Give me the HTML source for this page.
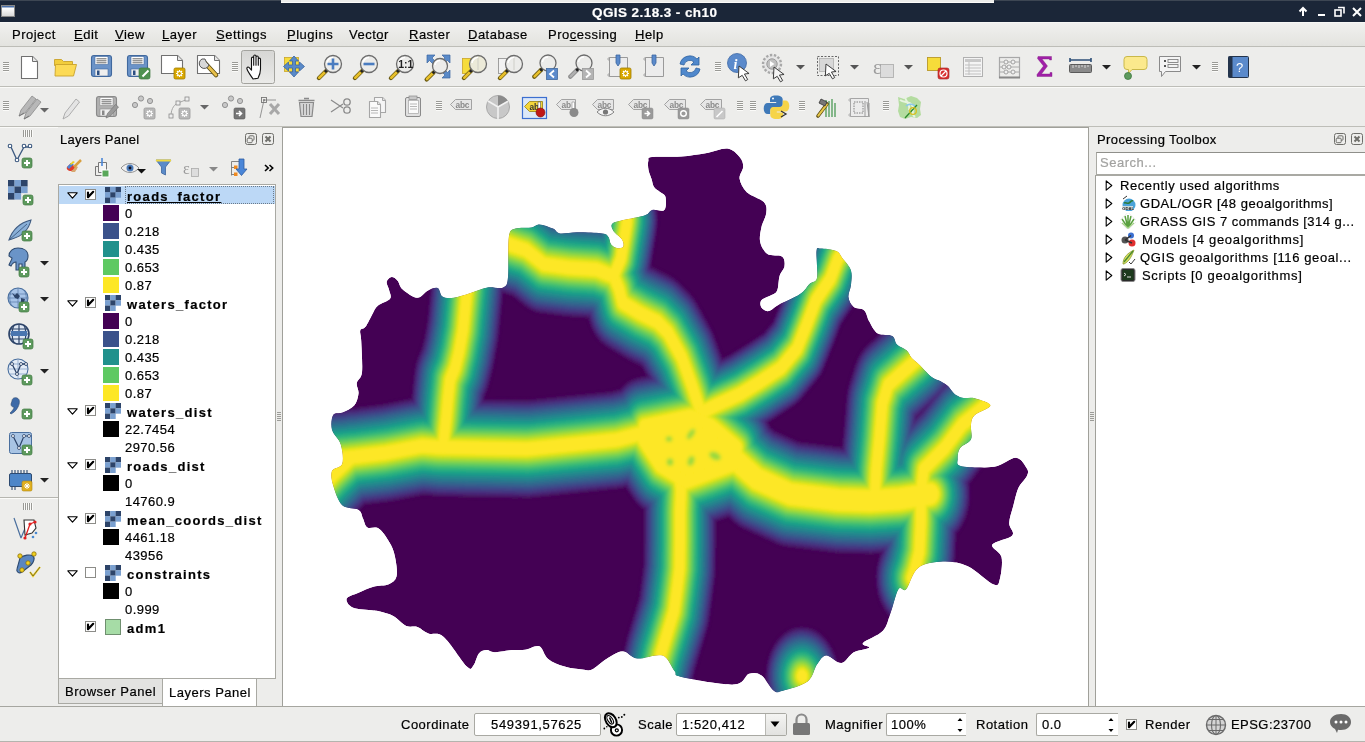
<!DOCTYPE html>
<html><head><meta charset="utf-8">
<style>
*{box-sizing:border-box}
html,body{margin:0;padding:0;width:1365px;height:742px;overflow:hidden;background:#ededeb;font-family:"Liberation Sans",sans-serif;font-size:13px;color:#000}
.a{position:absolute}
.t,.m{will-change:transform;-webkit-text-stroke:0.2px currentColor}
.t{position:absolute;white-space:pre;letter-spacing:0.5px;line-height:14px}
.b{font-weight:bold;letter-spacing:1.3px}
#title{left:0;top:0;width:1365px;height:22px;background:#1b2638}
#menu{left:0;top:22px;width:1365px;height:25px;background:linear-gradient(#f1f1ef,#e3e3df);border-bottom:1px solid #bdbdb7}
.m{position:absolute;top:28px;white-space:pre;letter-spacing:0.5px;line-height:14px}
.u{text-decoration:underline}
.hl{position:absolute;height:1px}
.vl{position:absolute;width:1px}
.tree{position:absolute;background:#fff;border:1px solid #a9a9a3}
.sw{position:absolute;width:16px;height:16px}
.cb{position:absolute;width:11px;height:11px;background:#fff;border:1px solid #8c8c88}
.cb svg{position:absolute;left:-1px;top:-1px}
</style></head>
<body>
<!-- title bar -->
<div id="title" class="a"></div>
<div class="a" style="left:0;top:0;width:1365px;height:1px;background:#3d4653"></div>
<div class="a" style="left:281px;top:0;width:713px;height:2px;background:#ededeb"></div>
<div class="a" style="left:281px;top:2px;width:713px;height:1px;background:#fcfcfa"></div>
<div class="a" style="left:1px;top:5px;width:14px;height:12px;background:linear-gradient(#4a6fa8 0,#4a6fa8 1px,#fff 2px,#d8d8d8 100%);border:1px solid #888"></div>
<div class="t b" style="left:592px;top:5px;color:#fff;font-size:13.5px;letter-spacing:0.42px;line-height:16px">QGIS 2.18.3 - ch10</div>
<svg class="a" style="left:1290px;top:0" width="75" height="22">
 <g fill="none" stroke="#fff" stroke-width="2">
  <path d="M13 16V9 M9.5 11.5 13 8 16.5 11.5"/>
  <path d="M28 15h7"/>
  <rect x="45" y="10" width="6" height="6" stroke-width="1.6"/>
  <path d="M48 7.5h6v6" stroke-width="1.6"/>
  <path d="M63 8l8 8M71 8l-8 8"/>
 </g>
</svg>
<!-- menu -->
<div id="menu" class="a"></div>
<div class="a" style="left:0;top:22px;width:1365px;height:1px;background:#f7f7f5"></div>
<div class="m" style="left:12px">Project</div>
<div class="m" style="left:74px"><span class="u">E</span>dit</div>
<div class="m" style="left:115px"><span class="u">V</span>iew</div>
<div class="m" style="left:162px"><span class="u">L</span>ayer</div>
<div class="m" style="left:216px"><span class="u">S</span>ettings</div>
<div class="m" style="left:287px"><span class="u">P</span>lugins</div>
<div class="m" style="left:349px">Vect<span class="u">o</span>r</div>
<div class="m" style="left:409px"><span class="u">R</span>aster</div>
<div class="m" style="left:468px"><span class="u">D</span>atabase</div>
<div class="m" style="left:548px">Pro<span class="u">c</span>essing</div>
<div class="m" style="left:635px"><span class="u">H</span>elp</div>

<!-- toolbars -->
<div class="a" style="left:0;top:86px;width:1365px;height:1px;background:#bebeb8"></div>
<div class="a" style="left:0;top:87px;width:1365px;height:1px;background:#fafaf8"></div>
<div class="a" style="left:0;top:126px;width:1365px;height:1px;background:#bebeb8"></div>
<div class="a" style="left:0;top:127px;width:58px;height:1px;background:#fafaf8"></div>

<svg class="a" style="left:0;top:0" width="1365" height="742">
<rect x="3" y="62" width="6" height="1" fill="#9a9a96"/><rect x="3" y="63" width="6" height="1" fill="#fbfbf9"/><rect x="3" y="64" width="6" height="1" fill="#9a9a96"/><rect x="3" y="65" width="6" height="1" fill="#fbfbf9"/><rect x="3" y="66" width="6" height="1" fill="#9a9a96"/><rect x="3" y="67" width="6" height="1" fill="#fbfbf9"/><rect x="3" y="68" width="6" height="1" fill="#9a9a96"/><rect x="3" y="69" width="6" height="1" fill="#fbfbf9"/><rect x="3" y="70" width="6" height="1" fill="#9a9a96"/><rect x="3" y="71" width="6" height="1" fill="#fbfbf9"/>
<path d="M21.5 56.5h11l5 5v17h-16z" fill="#fff" stroke="#707070" stroke-width="1.1" stroke-linejoin="round"/><path d="M32.5 56.5v5h5" fill="#e6e6e6" stroke="#707070" stroke-width="1"/>
<path d="M54.5 59.5h7l2 2h9v4h-18z" fill="#f2cd3c" stroke="#c9a32a" stroke-width="0.9"/>
<path d="M55.5 64.5h21l-3 11.5h-18.5z" fill="#fcda55" stroke="#c9a32a" stroke-width="0.9" stroke-linejoin="round"/>
<rect x="91.5" y="55.5" width="20" height="21" rx="2.5" fill="#6b93c8" stroke="#41699e" stroke-width="1.1"/><rect x="95" y="56.5" width="13" height="8" fill="#fff" stroke="#41699e" stroke-width="0.6"/><path d="M96.5 58.8h10M96.5 60.8h10M96.5 62.8h10" stroke="#555" stroke-width="0.9"/><rect x="95" y="69" width="13" height="7" fill="#eee" stroke="#41699e" stroke-width="0.6"/><rect x="97" y="70.5" width="2.5" height="4.5" fill="#2c4f82"/>
<rect x="127.5" y="55.5" width="20" height="21" rx="2.5" fill="#6b93c8" stroke="#41699e" stroke-width="1.1"/><rect x="131" y="56.5" width="13" height="8" fill="#fff" stroke="#41699e" stroke-width="0.6"/><path d="M132.5 58.8h10M132.5 60.8h10M132.5 62.8h10" stroke="#555" stroke-width="0.9"/><rect x="131" y="69" width="13" height="7" fill="#eee" stroke="#41699e" stroke-width="0.6"/><rect x="133" y="70.5" width="2.5" height="4.5" fill="#2c4f82"/>
<rect x="139" y="68" width="11" height="11" rx="2" fill="#4f9150" stroke="#3f7a3f" stroke-width="0.7"/><path d="" stroke="#fff" stroke-width="2"/>
<path d="M142.5 76.5l6-6" stroke="#fff" stroke-width="2"/>
<path d="M161.5 55.5h16l5 5v13h-21z" fill="#fff" stroke="#707070" stroke-width="1.1" stroke-linejoin="round"/><path d="M177.5 55.5v5h5" fill="#e6e6e6" stroke="#707070" stroke-width="1"/>
<rect x="174" y="68" width="11" height="11" rx="1.5" fill="#d9a800" stroke="#a07c00" stroke-width="0.8"/><g stroke="#fff" stroke-width="1.2"><path d="M179.5 70v7M176 73.5h7M177 71l5 5M182 71l-5 5"/></g><circle cx="179.5" cy="73.5" r="2" fill="#d9a800" stroke="#fff" stroke-width="1"/>
<path d="M197.5 55.5h17l5 5v13h-22z" fill="#fff" stroke="#707070" stroke-width="1.1" stroke-linejoin="round"/><path d="M214.5 55.5v5h5" fill="#e6e6e6" stroke="#707070" stroke-width="1"/>
<path d="M205 63l11 12" stroke="#5a4a10" stroke-width="4.5" stroke-linecap="round"/><path d="M205.5 63.5l10.5 11.5" stroke="#e8c04a" stroke-width="2.8" stroke-linecap="round"/>
<path d="M202 59a5 5 0 1 0 7 6l-2.5-2.5-1.5-3.5z" fill="#d8d8d8" stroke="#555" stroke-width="1"/>
<rect x="232" y="62" width="6" height="1" fill="#9a9a96"/><rect x="232" y="63" width="6" height="1" fill="#fbfbf9"/><rect x="232" y="64" width="6" height="1" fill="#9a9a96"/><rect x="232" y="65" width="6" height="1" fill="#fbfbf9"/><rect x="232" y="66" width="6" height="1" fill="#9a9a96"/><rect x="232" y="67" width="6" height="1" fill="#fbfbf9"/><rect x="232" y="68" width="6" height="1" fill="#9a9a96"/><rect x="232" y="69" width="6" height="1" fill="#fbfbf9"/><rect x="232" y="70" width="6" height="1" fill="#9a9a96"/><rect x="232" y="71" width="6" height="1" fill="#fbfbf9"/>
<rect x="241.5" y="50.5" width="33" height="33" rx="2" fill="url(#gpress)" stroke="#a3a39e" stroke-width="1"/>
<path d="M253 79c-2-3-5-7-6-10-.6-1.6 1-2.6 2.2-1.4l2.3 2.6v-12c0-1.4 2.2-1.4 2.2 0v7-9c0-1.5 2.3-1.5 2.3 0v9-8c0-1.5 2.3-1.5 2.3 0v8-6c0-1.4 2.2-1.4 2.2 0v10c0 4-1 6-2.5 9z" fill="#fff" stroke="#111" stroke-width="1.1" stroke-linejoin="round"/>
<rect x="284.5" y="57.5" width="14" height="14" fill="#f6dc3a" stroke="#c9a52a" stroke-width="0.8"/>
<path d="M294 56l4.5 5h-3v4h4v-3l5 4.5-5 4.5v-3h-4v4h3l-4.5 5-4.5-5h3v-4h-4v3l-5-4.5 5-4.5v3h4v-4h-3z" fill="#5a8ac8" stroke="#3b66a0" stroke-width="0.8" stroke-linejoin="round"/>
<path d="M325.88 71.12L318.88 78.12" stroke="#6a5a10" stroke-width="4.2" stroke-linecap="round"/><path d="M325.28 71.72L319.28 77.72" stroke="#e8c02a" stroke-width="2.6" stroke-linecap="round"/><path d="M327.38 69.62L324.88 72.12" stroke="#222" stroke-width="2.6"/><circle cx="333" cy="64" r="8.5" fill="#ececea" stroke="#6c6c6c" stroke-width="1.3"/><path d="M327.0 63a6.0 6.0 0 0 1 6.0 -5.5" stroke="#fff" stroke-width="1.5" fill="none"/>
<path d="M333 58.5v11M327.5 64h11" stroke="#4a7cc0" stroke-width="2.6"/>
<path d="M361.88 71.12L354.88 78.12" stroke="#6a5a10" stroke-width="4.2" stroke-linecap="round"/><path d="M361.28 71.72L355.28 77.72" stroke="#e8c02a" stroke-width="2.6" stroke-linecap="round"/><path d="M363.38 69.62L360.88 72.12" stroke="#222" stroke-width="2.6"/><circle cx="369" cy="64" r="8.5" fill="#ececea" stroke="#6c6c6c" stroke-width="1.3"/><path d="M363.0 63a6.0 6.0 0 0 1 6.0 -5.5" stroke="#fff" stroke-width="1.5" fill="none"/>
<path d="M363.5 64h11" stroke="#4a7cc0" stroke-width="2.6"/>
<path d="M397.88 71.12L390.88 78.12" stroke="#6a5a10" stroke-width="4.2" stroke-linecap="round"/><path d="M397.28 71.72L391.28 77.72" stroke="#e8c02a" stroke-width="2.6" stroke-linecap="round"/><path d="M399.38 69.62L396.88 72.12" stroke="#222" stroke-width="2.6"/><circle cx="405" cy="64" r="8.5" fill="#ececea" stroke="#6c6c6c" stroke-width="1.3"/><path d="M399.0 63a6.0 6.0 0 0 1 6.0 -5.5" stroke="#fff" stroke-width="1.5" fill="none"/>
<text x="398.2" y="68.3" font-family="Liberation Sans" font-weight="bold" font-size="10.5" fill="#222">1:1</text>
<rect x="427" y="54" width="24" height="24" fill="none"/>
<path d="M427 55h8l-3 3 3.5 3.5-2.5 2.5-3.5-3.5-2.5 2.5zM450 55h-8l3 3-3.5 3.5 2.5 2.5 3.5-3.5 2.5 2.5zM450 78h-8l3-3-3.5-3.5 2.5-2.5 3.5 3.5 2.5-2.5z" fill="#5a8ac8" stroke="#3b66a0" stroke-width="0.7"/>
<path d="M433.6 72.4L426.6 79.4" stroke="#6a5a10" stroke-width="4.2" stroke-linecap="round"/><path d="M433.0 73.0L427.0 79.0" stroke="#e8c02a" stroke-width="2.6" stroke-linecap="round"/><path d="M435.1 70.9L432.6 73.4" stroke="#222" stroke-width="2.6"/><circle cx="440" cy="66" r="7.5" fill="#ececea" stroke="#6c6c6c" stroke-width="1.3"/><path d="M435.0 65a5.0 5.0 0 0 1 5.0 -4.5" stroke="#fff" stroke-width="1.5" fill="none"/>
<rect x="462.5" y="58.5" width="8" height="15" fill="#f6dc3a" stroke="#c9a52a" stroke-width="0.8"/>
<path d="M470.88 71.12L463.88 78.12" stroke="#6a5a10" stroke-width="4.2" stroke-linecap="round"/><path d="M470.28 71.72L464.28 77.72" stroke="#e8c02a" stroke-width="2.6" stroke-linecap="round"/><path d="M472.38 69.62L469.88 72.12" stroke="#222" stroke-width="2.6"/><circle cx="478" cy="64" r="8.5" fill="#ecead8" stroke="#6c6c6c" stroke-width="1.3"/><path d="M472.0 63a6.0 6.0 0 0 1 6.0 -5.5" stroke="#fff" stroke-width="1.5" fill="none"/>
<rect x="498.5" y="58.5" width="8" height="15" fill="#f2f2f2" stroke="#8a8a8a" stroke-width="0.8"/>
<path d="M506.88 71.12L499.88 78.12" stroke="#6a5a10" stroke-width="4.2" stroke-linecap="round"/><path d="M506.28 71.72L500.28 77.72" stroke="#e8c02a" stroke-width="2.6" stroke-linecap="round"/><path d="M508.38 69.62L505.88 72.12" stroke="#222" stroke-width="2.6"/><circle cx="514" cy="64" r="8.5" fill="#ececea" stroke="#6c6c6c" stroke-width="1.3"/><path d="M508.0 63a6.0 6.0 0 0 1 6.0 -5.5" stroke="#fff" stroke-width="1.5" fill="none"/>
<path d="M478 58v12M514 58v12" stroke="#c8c8c0" stroke-width="0.8"/>
<path d="M541.24 69.76L534.24 76.76" stroke="#6a5a10" stroke-width="4.2" stroke-linecap="round"/><path d="M540.64 70.36L534.64 76.36" stroke="#e8c02a" stroke-width="2.6" stroke-linecap="round"/><path d="M542.74 68.26L540.24 70.76" stroke="#222" stroke-width="2.6"/><circle cx="548" cy="63" r="8" fill="#ececea" stroke="#6c6c6c" stroke-width="1.3"/><path d="M542.5 62a5.5 5.5 0 0 1 5.5 -5" stroke="#fff" stroke-width="1.5" fill="none"/>
<rect x="546.5" y="68.5" width="11" height="11" fill="#5b8acb" stroke="#41699e" stroke-width="0.8"/><path d="M554 70.5l-4 3.5 4 3.5" stroke="#fff" stroke-width="1.8" fill="none"/>
<path d="M577.24 69.76L570.24 76.76" stroke="#8a8a8a" stroke-width="4.2" stroke-linecap="round"/><path d="M576.64 70.36L570.64 76.36" stroke="#b0b0b0" stroke-width="2.6" stroke-linecap="round"/><path d="M578.74 68.26L576.24 70.76" stroke="#222" stroke-width="2.6"/><circle cx="584" cy="63" r="8" fill="#ececea" stroke="#6c6c6c" stroke-width="1.3"/><path d="M578.5 62a5.5 5.5 0 0 1 5.5 -5" stroke="#fff" stroke-width="1.5" fill="none"/>
<rect x="582.5" y="68.5" width="11" height="11" fill="#b4b4b4" stroke="#9a9a9a" stroke-width="0.8"/><path d="M586 70.5l4 3.5-4 3.5" stroke="#fff" stroke-width="1.8" fill="none"/>
<path d="M609.5 57.5h18v19h-18z" fill="#ececec" stroke="#9a9a9a" stroke-width="1"/><path d="M609.5 57.5c-2 0-2 3 0 3M609.5 76.5c-2 0-2-3 0-3" stroke="#9a9a9a" fill="none"/>
<path d="M616 55h4v8l-2 3-2-3z" fill="#5b8acb" stroke="#3b66a0" stroke-width="0.8"/>
<rect x="620" y="68" width="11" height="11" rx="1.5" fill="#d9a800" stroke="#a07c00" stroke-width="0.8"/><g stroke="#fff" stroke-width="1.2"><path d="M625.5 70v7M622 73.5h7M623 71l5 5M628 71l-5 5"/></g><circle cx="625.5" cy="73.5" r="2" fill="#d9a800" stroke="#fff" stroke-width="1"/>
<path d="M645.5 57.5h18v19h-18z" fill="#ececec" stroke="#9a9a9a" stroke-width="1"/><path d="M645.5 57.5c-2 0-2 3 0 3M645.5 76.5c-2 0-2-3 0-3" stroke="#9a9a9a" fill="none"/>
<path d="M652 55h4v8l-2 3-2-3z" fill="#5b8acb" stroke="#3b66a0" stroke-width="0.8"/>
<path d="M680 64a10 10 0 0 1 17-5l2-2v8h-8l3-3a6 6 0 0 0-10 3z" fill="#4f88cc" stroke="#2f62a0" stroke-width="0.8" stroke-linejoin="round"/>
<path d="M700 69a10 10 0 0 1-17 5l-2 2v-8h8l-3 3a6 6 0 0 0 10-3z" fill="#4f88cc" stroke="#2f62a0" stroke-width="0.8" stroke-linejoin="round"/>
<rect x="715" y="62" width="6" height="1" fill="#9a9a96"/><rect x="715" y="63" width="6" height="1" fill="#fbfbf9"/><rect x="715" y="64" width="6" height="1" fill="#9a9a96"/><rect x="715" y="65" width="6" height="1" fill="#fbfbf9"/><rect x="715" y="66" width="6" height="1" fill="#9a9a96"/><rect x="715" y="67" width="6" height="1" fill="#fbfbf9"/><rect x="715" y="68" width="6" height="1" fill="#9a9a96"/><rect x="715" y="69" width="6" height="1" fill="#fbfbf9"/><rect x="715" y="70" width="6" height="1" fill="#9a9a96"/><rect x="715" y="71" width="6" height="1" fill="#fbfbf9"/>
<circle cx="737" cy="63" r="9.5" fill="#5b8acb" stroke="#3f6aa6" stroke-width="0.8"/><text x="733.5" y="68.5" font-family="Liberation Serif" font-style="italic" font-weight="bold" font-size="14" fill="#fff">i</text>
<path d="M739 66l11.0 6.0l-4.5 1.2l4.0 5.0l-2.0 1.6l-4.0 -5.0l-3.5 3.0z" fill="#fff" stroke="#333" stroke-width="0.9" stroke-linejoin="round" transform="rotate(8 739 66)"/>
<circle cx="772" cy="64" r="9" fill="#e6e6e6" stroke="#a8a8a8" stroke-width="2.4" stroke-dasharray="2.4 1.6"/><circle cx="772" cy="64" r="5.2" fill="#c0c0c0" stroke="#9a9a9a"/><path d="M770 61v6l4.5-3z" fill="#fff"/>
<path d="M774 67l11.0 6.0l-4.5 1.2l4.0 5.0l-2.0 1.6l-4.0 -5.0l-3.5 3.0z" fill="#f4f4f4" stroke="#333" stroke-width="0.9" stroke-linejoin="round" transform="rotate(8 774 67)"/>
<path d="M796 65h9l-4.5 4.5z" fill="#555"/>
<rect x="817.5" y="56.5" width="21" height="19" fill="none" stroke="#666" stroke-width="1" stroke-dasharray="2 1.5"/><rect x="819.5" y="58.5" width="14" height="13" fill="#d8d8d8" stroke="#b0b0b0" stroke-width="0.8"/>
<path d="M826 64l11.0 6.0l-4.5 1.2l4.0 5.0l-2.0 1.6l-4.0 -5.0l-3.5 3.0z" fill="#fff" stroke="#333" stroke-width="0.9" stroke-linejoin="round" transform="rotate(8 826 64)"/>
<path d="M850 65h9l-4.5 4.5z" fill="#555"/>
<rect x="880.5" y="64.5" width="13" height="13" fill="#dcdcdc" stroke="#b0b0b0" stroke-width="0.9"/>
<text x="873" y="74" font-family="Liberation Serif" font-size="20" fill="#9c9c9c">&#949;</text>
<path d="M904 65h9l-4.5 4.5z" fill="#555"/>
<rect x="927.5" y="57.5" width="13" height="13" fill="#f6dc3a" stroke="#b9992a" stroke-width="0.9"/>
<rect x="938" y="68" width="11" height="11" rx="2" fill="#d83030" stroke="#a02020" stroke-width="0.6"/><circle cx="943.5" cy="73.5" r="3.5" fill="none" stroke="#fff" stroke-width="1.2"/><path d="M941 76l5-5" stroke="#fff" stroke-width="1.2"/>
<rect x="963.5" y="57.5" width="19" height="19" fill="#f4f4f4" stroke="#b0b0b0" stroke-width="1"/><rect x="965" y="59" width="16" height="3" fill="#c8c8c8"/><path d="M965 65h16M965 68h16M965 71h16M965 74h16M969 62v13" stroke="#c0c0c0" stroke-width="1"/>
<rect x="999.5" y="57.5" width="20" height="20" fill="none" stroke="#a8a8a8" stroke-width="1.2"/><path d="M999 77.5h21" stroke="#888" stroke-width="2"/>
<path d="M1000 62h19M1000 67h19M1000 72h19" stroke="#aaa" stroke-width="1"/><g fill="#f0f0f0" stroke="#9a9a9a" stroke-width="0.9"><circle cx="1006" cy="62" r="2"/><circle cx="1013" cy="62" r="2"/><circle cx="1004" cy="67" r="2"/><circle cx="1009" cy="67" r="2"/><circle cx="1006" cy="72" r="2"/><circle cx="1013" cy="72" r="2"/></g>
<path d="M1038 56.5h13.5v3.5h-2v-1h-7.5l5.5 7-6 8h8.5v-1.5h2v4h-15v-2l6.5-8.5-6-7.5z" fill="#a020a8" stroke="#801880" stroke-width="0.4"/>
<path d="M1070 58v4M1091 58v4M1070 60h21" stroke="#2e4f78" stroke-width="1.6"/><rect x="1069.5" y="64.5" width="22" height="8" rx="1" fill="#8a8a8a" stroke="#5a5a5a" stroke-width="1"/><path d="M1073 65v3M1076 65v2M1079 65v3M1082 65v2M1085 65v3M1088 65v2" stroke="#eee" stroke-width="0.8"/>
<path d="M1102 65h9l-4.5 4.5z" fill="#222"/>
<path d="M1127 56.5h17a3 3 0 0 1 3 3v7a3 3 0 0 1-3 3h-12l-3.5 4v-4h-1.5a3 3 0 0 1-3-3v-7a3 3 0 0 1 3-3z" fill="#fbe98c" stroke="#c9b84a" stroke-width="1"/><circle cx="1128" cy="76" r="3.5" fill="#5e9a5e" stroke="#3f7a3f" stroke-width="0.8"/>
<path d="M1159.5 56.5h21v15h-15l-4 5v-5h-2z" fill="#f4f4f4" stroke="#8a8a8a" stroke-width="1" stroke-linejoin="round"/><path d="M1164 61h2M1164 66h2" stroke="#555" stroke-width="2"/><rect x="1168" y="59.5" width="10" height="3" fill="none" stroke="#777" stroke-width="0.8"/><rect x="1168" y="64.5" width="10" height="3" fill="none" stroke="#777" stroke-width="0.8"/>
<path d="M1192 65h9l-4.5 4.5z" fill="#222"/>
<rect x="1212" y="62" width="6" height="1" fill="#9a9a96"/><rect x="1212" y="63" width="6" height="1" fill="#fbfbf9"/><rect x="1212" y="64" width="6" height="1" fill="#9a9a96"/><rect x="1212" y="65" width="6" height="1" fill="#fbfbf9"/><rect x="1212" y="66" width="6" height="1" fill="#9a9a96"/><rect x="1212" y="67" width="6" height="1" fill="#fbfbf9"/><rect x="1212" y="68" width="6" height="1" fill="#9a9a96"/><rect x="1212" y="69" width="6" height="1" fill="#fbfbf9"/><rect x="1212" y="70" width="6" height="1" fill="#9a9a96"/><rect x="1212" y="71" width="6" height="1" fill="#fbfbf9"/>
<rect x="1228.5" y="56.5" width="20" height="21" rx="1" fill="#5b8acb" stroke="#24344c" stroke-width="1"/><rect x="1228.5" y="56.5" width="4" height="21" fill="#24344c"/><text x="1236" y="72" font-family="Liberation Sans" font-size="13" fill="#fff">?</text>
<rect x="3" y="101" width="6" height="1" fill="#9a9a96"/><rect x="3" y="102" width="6" height="1" fill="#fbfbf9"/><rect x="3" y="103" width="6" height="1" fill="#9a9a96"/><rect x="3" y="104" width="6" height="1" fill="#fbfbf9"/><rect x="3" y="105" width="6" height="1" fill="#9a9a96"/><rect x="3" y="106" width="6" height="1" fill="#fbfbf9"/><rect x="3" y="107" width="6" height="1" fill="#9a9a96"/><rect x="3" y="108" width="6" height="1" fill="#fbfbf9"/><rect x="3" y="109" width="6" height="1" fill="#9a9a96"/><rect x="3" y="110" width="6" height="1" fill="#fbfbf9"/>
<g stroke="#8a8a8a" stroke-width="0.8" fill="#b8b8b8"><path d="M19 116l2-6 11-14 4 3-11 14z"/><path d="M24 119l2-6 11-14 4 3-11 14z"/></g><path d="M19 116l5-3M24 119l5-3" stroke="#777" stroke-width="1"/>
<path d="M40 108h9l-4.5 4.5z" fill="#666"/>
<path d="M63 119l2-6 11-14 3.5 3-11 14z" fill="#e4e4e4" stroke="#a6a6a6" stroke-width="0.9"/>
<rect x="96.5" y="96.5" width="20" height="20" rx="2.5" fill="#b0b0b0" stroke="#8a8a8a" stroke-width="1.1"/><rect x="100" y="97.5" width="13" height="8" fill="#fff" stroke="#8a8a8a" stroke-width="0.6"/><path d="M101.5 99.8h10M101.5 101.8h10M101.5 103.8h10" stroke="#555" stroke-width="0.9"/><rect x="100" y="109" width="13" height="7" fill="#eee" stroke="#8a8a8a" stroke-width="0.6"/><rect x="102" y="110.5" width="2.5" height="4.5" fill="#888"/>
<path d="M106 118l1.5-4.5 8-9 3 2.5-8 9z" fill="#9a9a9a" stroke="#777" stroke-width="0.7"/>
<g fill="#c8c8c8" stroke="#8a8a8a" stroke-width="0.9"><circle cx="135" cy="105" r="2.6"/><circle cx="141" cy="98.5" r="2.6"/><circle cx="150" cy="101" r="2.6"/></g>
<rect x="144" y="108" width="11" height="11" rx="1.5" fill="#b8b8b8" stroke="#9a9a9a" stroke-width="0.8"/><g stroke="#fff" stroke-width="1.2"><path d="M149.5 110v7M146 113.5h7M147 111l5 5M152 111l-5 5"/></g><circle cx="149.5" cy="113.5" r="2" fill="#b8b8b8" stroke="#fff" stroke-width="1"/>
<path d="M171 116c0-8 4-12 7-13l10-4" stroke="#a6a6a6" stroke-width="1" fill="none"/><g fill="#eee" stroke="#8a8a8a" stroke-width="0.8"><rect x="169" y="114" width="4" height="4"/><rect x="176" y="101" width="4" height="4"/><rect x="185" y="97" width="4" height="4"/></g>
<rect x="179" y="108" width="11" height="11" rx="1.5" fill="#b8b8b8" stroke="#9a9a9a" stroke-width="0.8"/><g stroke="#fff" stroke-width="1.2"><path d="M184.5 110v7M181 113.5h7M182 111l5 5M187 111l-5 5"/></g><circle cx="184.5" cy="113.5" r="2" fill="#b8b8b8" stroke="#fff" stroke-width="1"/>
<path d="M200 105h9l-4.5 4.5z" fill="#666"/>
<g fill="#c8c8c8" stroke="#8a8a8a" stroke-width="0.9"><circle cx="225" cy="105" r="2.6"/><circle cx="231" cy="98.5" r="2.6"/><circle cx="240" cy="101" r="2.6"/></g>
<rect x="234" y="108" width="11" height="11" rx="1.5" fill="#777" stroke="#555" stroke-width="0.6"/><path d="M236 113.5h5M239 111l2.5 2.5-2.5 2.5" stroke="#fff" stroke-width="1.6" fill="none"/>
<path d="M260 118l4-18M264 100h12" stroke="#8a8a8a" stroke-width="0.9"/><rect x="261.5" y="97.5" width="5" height="5" fill="none" stroke="#777" stroke-width="0.9"/><circle cx="264" cy="100" r="1" fill="#777"/>
<path d="M270 104l9 10M279 104l-9 10" stroke="#a8a8a8" stroke-width="3"/>
<path d="M298.5 100.5h16M304 98.5h5" stroke="#8a8a8a" stroke-width="1.6"/><path d="M299.5 102.5h14l-1.5 14h-11z" fill="#d4d4d4" stroke="#8a8a8a" stroke-width="1.2"/><path d="M303.5 104v11M306.5 104v11M309.5 104v11" stroke="#8a8a8a" stroke-width="1"/>
<path d="M331 100l12 8M331 112l12-8" stroke="#8a8a8a" stroke-width="1.2"/><circle cx="347" cy="102" r="3.2" fill="none" stroke="#8a8a8a" stroke-width="1.3"/><circle cx="347" cy="110" r="3.2" fill="none" stroke="#8a8a8a" stroke-width="1.3"/>
<path d="M374.5 97.5h8l3 3v12h-11z" fill="#f6f6f6" stroke="#a6a6a6" stroke-width="1.1" stroke-linejoin="round"/><path d="M382.5 97.5v3h3" fill="#e6e6e6" stroke="#a6a6a6" stroke-width="1"/>
<path d="M369.5 101.5h8l3 3v13h-11z" fill="#fafafa" stroke="#a6a6a6" stroke-width="1.1" stroke-linejoin="round"/><path d="M377.5 101.5v3h3" fill="#e6e6e6" stroke="#a6a6a6" stroke-width="1"/>
<path d="M371 108h7M371 110.5h7M371 113h7" stroke="#a6a6a6" stroke-width="0.8"/>
<rect x="405.5" y="97.5" width="15" height="19" rx="1.5" fill="#e0e0e0" stroke="#8a8a8a" stroke-width="1"/><rect x="409" y="96" width="8" height="3.5" fill="#c8c8c8" stroke="#8a8a8a" stroke-width="0.7"/><rect x="408.5" y="100.5" width="10" height="13" fill="#fafafa" stroke="#a6a6a6" stroke-width="0.7"/><path d="M410 104h7M410 106.5h7M410 109h7" stroke="#a6a6a6" stroke-width="0.8"/>
<rect x="436" y="101" width="6" height="1" fill="#9a9a96"/><rect x="436" y="102" width="6" height="1" fill="#fbfbf9"/><rect x="436" y="103" width="6" height="1" fill="#9a9a96"/><rect x="436" y="104" width="6" height="1" fill="#fbfbf9"/><rect x="436" y="105" width="6" height="1" fill="#9a9a96"/><rect x="436" y="106" width="6" height="1" fill="#fbfbf9"/><rect x="436" y="107" width="6" height="1" fill="#9a9a96"/><rect x="436" y="108" width="6" height="1" fill="#fbfbf9"/><rect x="436" y="109" width="6" height="1" fill="#9a9a96"/><rect x="436" y="110" width="6" height="1" fill="#fbfbf9"/>
<path d="M450.5 104.5l5-5h16v10h-16z" fill="#e6e6e6" stroke="#9a9a9a" stroke-width="0.9" stroke-linejoin="round"/><text x="455.5" y="107.7" font-family="Liberation Sans" font-weight="bold" font-size="8.3" fill="#8a8a8a" letter-spacing="-0.2">abc</text>
<circle cx="498" cy="107" r="11.5" fill="#c8c8c8" stroke="#a8a8a8" stroke-width="1"/><path d="M498 107v-11.5a11.5 11.5 0 0 1 10 5.8z" fill="#8a8a8a"/><path d="M498 107v12M498 107l-10-6M498 107l10-5.8" stroke="#f2f2f2" stroke-width="1.6"/>
<rect x="522.5" y="97.5" width="24" height="21" fill="#dce8f8" stroke="#3c6fd0" stroke-width="1.2"/>
<path d="M524.5 106.5l5-5h13v10h-13z" fill="#f4d63a" stroke="#a08a20" stroke-width="0.9" stroke-linejoin="round"/><text x="529.5" y="109.7" font-family="Liberation Sans" font-weight="bold" font-size="8.3" fill="#333" letter-spacing="-0.2">ab</text>
<path d="M538 102h2.5v7h-2.5z" fill="#fff" stroke="#555" stroke-width="0.6"/><circle cx="540.5" cy="112.5" r="4.5" fill="#c01818" stroke="#801010" stroke-width="0.6"/>
<path d="M556.5 104.5l5-5h14v10h-14z" fill="#e6e6e6" stroke="#9a9a9a" stroke-width="0.9" stroke-linejoin="round"/><text x="561.5" y="107.7" font-family="Liberation Sans" font-weight="bold" font-size="8.3" fill="#8a8a8a" letter-spacing="-0.2">ab</text>
<path d="M572 102h2.5v7h-2.5z" fill="#fff" stroke="#8a8a8a" stroke-width="0.6"/><circle cx="574" cy="112.5" r="4.5" fill="#8a8a8a"/>
<path d="M592.5 104.5l5-5h16v10h-16z" fill="#e6e6e6" stroke="#9a9a9a" stroke-width="0.9" stroke-linejoin="round"/><text x="597.5" y="107.7" font-family="Liberation Sans" font-weight="bold" font-size="8.3" fill="#8a8a8a" letter-spacing="-0.2">abc</text>
<path d="M597 112c5-5 12-5 17 0c-5 5-12 5-17 0z" fill="#f4f4f4" stroke="#777" stroke-width="0.9"/><circle cx="605.5" cy="112" r="2.6" fill="#777"/>
<path d="M628.5 104.5l5-5h16v10h-16z" fill="#e6e6e6" stroke="#9a9a9a" stroke-width="0.9" stroke-linejoin="round"/><text x="633.5" y="107.7" font-family="Liberation Sans" font-weight="bold" font-size="8.3" fill="#8a8a8a" letter-spacing="-0.2">abc</text>
<rect x="642" y="108" width="11" height="11" rx="1.6" fill="#9a9a9a" stroke="#888" stroke-width="0.5"/><path d="M644.5 113.5h5M647 111l2.5 2.5-2.5 2.5" stroke="#fff" stroke-width="1.6" fill="none"/>
<path d="M664.5 104.5l5-5h16v10h-16z" fill="#e6e6e6" stroke="#9a9a9a" stroke-width="0.9" stroke-linejoin="round"/><text x="669.5" y="107.7" font-family="Liberation Sans" font-weight="bold" font-size="8.3" fill="#8a8a8a" letter-spacing="-0.2">abc</text>
<rect x="678" y="108" width="11" height="11" rx="1.6" fill="#9a9a9a" stroke="#888" stroke-width="0.5"/><circle cx="683.5" cy="113.5" r="2.8" fill="none" stroke="#fff" stroke-width="1.4"/>
<path d="M700.5 104.5l5-5h16v10h-16z" fill="#e6e6e6" stroke="#9a9a9a" stroke-width="0.9" stroke-linejoin="round"/><text x="705.5" y="107.7" font-family="Liberation Sans" font-weight="bold" font-size="8.3" fill="#8a8a8a" letter-spacing="-0.2">abc</text>
<rect x="714" y="108" width="11" height="11" rx="1.6" fill="#c8c8c8" stroke="#aaa" stroke-width="0.5"/><path d="M716.5 117l6-6" stroke="#fff" stroke-width="1.6"/>
<rect x="737" y="101" width="6" height="1" fill="#9a9a96"/><rect x="737" y="102" width="6" height="1" fill="#fbfbf9"/><rect x="737" y="103" width="6" height="1" fill="#9a9a96"/><rect x="737" y="104" width="6" height="1" fill="#fbfbf9"/><rect x="737" y="105" width="6" height="1" fill="#9a9a96"/><rect x="737" y="106" width="6" height="1" fill="#fbfbf9"/><rect x="737" y="107" width="6" height="1" fill="#9a9a96"/><rect x="737" y="108" width="6" height="1" fill="#fbfbf9"/><rect x="737" y="109" width="6" height="1" fill="#9a9a96"/><rect x="737" y="110" width="6" height="1" fill="#fbfbf9"/>
<rect x="750" y="101" width="6" height="1" fill="#9a9a96"/><rect x="750" y="102" width="6" height="1" fill="#fbfbf9"/><rect x="750" y="103" width="6" height="1" fill="#9a9a96"/><rect x="750" y="104" width="6" height="1" fill="#fbfbf9"/><rect x="750" y="105" width="6" height="1" fill="#9a9a96"/><rect x="750" y="106" width="6" height="1" fill="#fbfbf9"/><rect x="750" y="107" width="6" height="1" fill="#9a9a96"/><rect x="750" y="108" width="6" height="1" fill="#fbfbf9"/><rect x="750" y="109" width="6" height="1" fill="#9a9a96"/><rect x="750" y="110" width="6" height="1" fill="#fbfbf9"/>
<path d="M776 95.5c-5 0-6 2-6 4v2.5h6.2v1h-8.5c-2.5 0-4 2-4 5.5s1.5 5.5 4 5.5h2.5v-3c0-2 1.5-3.5 3.5-3.5h6c1.8 0 3-1.3 3-3v-5c0-2-1.8-4-6.5-4z" fill="#3f79b8"/><circle cx="773" cy="98.5" r="1" fill="#fff"/>
<path d="M777 119c5 0 6-2 6-4v-2.5h-6.2v-1h8.5c2.5 0 4-2 4-5.5s-1.5-5.5-4-5.5h-2.5v3c0 2-1.5 3.5-3.5 3.5h-6c-1.8 0-3 1.3-3 3v5c0 2 1.8 4 6.5 4z" fill="#f6d448"/><path d="M781 111l5 3-5 3" stroke="#333" stroke-width="1.3" fill="none"/>
<rect x="799" y="101" width="6" height="1" fill="#9a9a96"/><rect x="799" y="102" width="6" height="1" fill="#fbfbf9"/><rect x="799" y="103" width="6" height="1" fill="#9a9a96"/><rect x="799" y="104" width="6" height="1" fill="#fbfbf9"/><rect x="799" y="105" width="6" height="1" fill="#9a9a96"/><rect x="799" y="106" width="6" height="1" fill="#fbfbf9"/><rect x="799" y="107" width="6" height="1" fill="#9a9a96"/><rect x="799" y="108" width="6" height="1" fill="#fbfbf9"/><rect x="799" y="109" width="6" height="1" fill="#9a9a96"/><rect x="799" y="110" width="6" height="1" fill="#fbfbf9"/>
<path d="M826 100v17M829 101v16M832 99v18M835 103v14" stroke="#2e8a3a" stroke-width="1.1" fill="none"/>
<path d="M818 116l9-12" stroke="#5a4a10" stroke-width="3.6" stroke-linecap="round"/><path d="M818.3 115.7l8.6-11.4" stroke="#e8c84a" stroke-width="2" stroke-linecap="round"/><path d="M821 99l6 3-2 4-6-3z" fill="#777" stroke="#333" stroke-width="0.8"/>
<path d="M850.5 98.5h18v18h-18z" fill="#ececec" stroke="#a6a6a6" stroke-width="1"/><path d="M850.5 98.5c-2 0-2 3 0 3M850.5 116.5c-2 0-2-3 0-3" stroke="#a6a6a6" fill="none"/><rect x="854" y="102" width="9" height="11" fill="none" stroke="#777" stroke-width="0.9" stroke-dasharray="1.5 1"/><path d="M865 101v16M867 102l2 15M869 103v14" stroke="#9a9a9a" stroke-width="1"/>
<rect x="883" y="101" width="6" height="1" fill="#9a9a96"/><rect x="883" y="102" width="6" height="1" fill="#fbfbf9"/><rect x="883" y="103" width="6" height="1" fill="#9a9a96"/><rect x="883" y="104" width="6" height="1" fill="#fbfbf9"/><rect x="883" y="105" width="6" height="1" fill="#9a9a96"/><rect x="883" y="106" width="6" height="1" fill="#fbfbf9"/><rect x="883" y="107" width="6" height="1" fill="#9a9a96"/><rect x="883" y="108" width="6" height="1" fill="#fbfbf9"/><rect x="883" y="109" width="6" height="1" fill="#9a9a96"/><rect x="883" y="110" width="6" height="1" fill="#fbfbf9"/>
<path d="M898 97l6 2 7-3 6 2 4 4-1 7 1 6-4 3-6-1-6 2-5-2-2-6 1-6z" fill="#b4dca0"/><path d="M900 100c4 3 9 1 12 5s-2 8 3 12M905 96c0 6 6 8 4 14" stroke="#e8f4e0" stroke-width="2" fill="none"/><path d="M906 106c3-3 8-2 10 1" stroke="#8cc8e8" stroke-width="1.6" fill="none"/><path d="M905 118l12-13" stroke="#2a8a2a" stroke-width="1.3"/><circle cx="913" cy="111" r="3.3" fill="none" stroke="#d8c020" stroke-width="1.3"/>
<rect x="23" y="130" width="1" height="7" fill="#9a9a96"/><rect x="24" y="130" width="1" height="7" fill="#fbfbf9"/><rect x="25" y="130" width="1" height="7" fill="#9a9a96"/><rect x="26" y="130" width="1" height="7" fill="#fbfbf9"/><rect x="27" y="130" width="1" height="7" fill="#9a9a96"/><rect x="28" y="130" width="1" height="7" fill="#fbfbf9"/><rect x="29" y="130" width="1" height="7" fill="#9a9a96"/><rect x="30" y="130" width="1" height="7" fill="#fbfbf9"/><rect x="31" y="130" width="1" height="7" fill="#9a9a96"/><rect x="32" y="130" width="1" height="7" fill="#fbfbf9"/>
<path d="M11 147l6 13l7-13h8" stroke="#3d5a80" stroke-width="1.3" fill="none"/><g fill="#fff" stroke="#3d5a80" stroke-width="1.1"><circle cx="10" cy="146" r="1.8"/><circle cx="17" cy="160" r="1.8"/><circle cx="24" cy="146" r="1.8"/><circle cx="30" cy="146" r="1.8"/></g>
<rect x="22" y="158" width="10" height="10" rx="2" fill="#5e9a5e" stroke="#3f7a3f" stroke-width="0.7"/><path d="M27.0 160v6M24 163.0h6" stroke="#fff" stroke-width="2"/>
<rect x="8.0" y="180.0" width="6.6" height="6.6" fill="#2d4469"/>
<rect x="14.5" y="180.0" width="6.6" height="6.6" fill="#7aa0d0"/>
<rect x="21.0" y="180.0" width="6.6" height="6.6" fill="#2d4469"/>
<rect x="8.0" y="186.5" width="6.6" height="6.6" fill="#7aa0d0"/>
<rect x="14.5" y="186.5" width="6.6" height="6.6" fill="#2d4469"/>
<rect x="21.0" y="186.5" width="6.6" height="6.6" fill="#7aa0d0"/>
<rect x="8.0" y="193.0" width="6.6" height="6.6" fill="#2d4469"/>
<rect x="14.5" y="193.0" width="6.6" height="6.6" fill="#7aa0d0"/>
<rect x="23" y="195" width="10" height="10" rx="2" fill="#5e9a5e" stroke="#3f7a3f" stroke-width="0.7"/><path d="M28.0 197v6M25 200.0h6" stroke="#fff" stroke-width="2"/>
<path d="M9 240c3-9 10-17 22-20c-2 9-9 16-19 19z" fill="#8ab0d8" stroke="#3d5a80" stroke-width="1.1"/><path d="M9 240l18-16" stroke="#3d5a80" stroke-width="0.9"/>
<rect x="22" y="231" width="10" height="10" rx="2" fill="#5e9a5e" stroke="#3f7a3f" stroke-width="0.7"/><path d="M27.0 233v6M24 236.0h6" stroke="#fff" stroke-width="2"/>
<path d="M9 256c0-5 4-8 9-8 6 0 10 3 10 8 0 3-1 5-3 6v6h-3v-4h-3v6h-3v-8c-3 0-4 2-5 4l-2-1c1-3 3-5 3-7z" fill="#6a94c8" stroke="#2d4a70" stroke-width="1.1"/>
<rect x="19" y="267" width="10" height="10" rx="2" fill="#5e9a5e" stroke="#3f7a3f" stroke-width="0.7"/><path d="M24.0 269v6M21 272.0h6" stroke="#fff" stroke-width="2"/>
<path d="M40 261h9l-4.5 4.5z" fill="#222"/>
<circle cx="18" cy="298" r="10" fill="#a8c4e8" stroke="#4a6f9e" stroke-width="1.1"/><path d="M9 294h18M8 298h20M9 302h18M18 288v20M12 290c-3 5-3 11 0 16M24 290c3 5 3 11 0 16" stroke="#4a6f9e" stroke-width="0.6" fill="none"/><path d="M12 293l3 2 2-2 3 3-2 3-3-1zM21 298l4 1-1 4-3-1z" fill="#2d4469"/>
<rect x="19" y="302" width="10" height="10" rx="2" fill="#5e9a5e" stroke="#3f7a3f" stroke-width="0.7"/><path d="M24.0 304v6M21 307.0h6" stroke="#fff" stroke-width="2"/>
<path d="M40 297h9l-4.5 4.5z" fill="#222"/>
<circle cx="19" cy="334" r="10" fill="#dfe8f4" stroke="#2d4469" stroke-width="1.6"/><path d="M9 334h20M10.5 329h17M10.5 339h17M19 324v20M14 325c-2.5 5-2.5 13 0 18M24 325c2.5 5 2.5 13 0 18" stroke="#2d4469" stroke-width="1.2" fill="none"/><rect x="11" y="331" width="16" height="5" fill="#4a76b0"/>
<rect x="23" y="339" width="10" height="10" rx="2" fill="#5e9a5e" stroke="#3f7a3f" stroke-width="0.7"/><path d="M28.0 341v6M25 344.0h6" stroke="#fff" stroke-width="2"/>
<circle cx="18" cy="369" r="10" fill="#e4ecf6" stroke="#4a6f9e" stroke-width="1.1"/><path d="M8 369h20M10 364h16M10 374h16M18 359v20" stroke="#7a9ac0" stroke-width="0.7"/><path d="M12 364l5 10 4-10h6" stroke="#2d4469" stroke-width="1.3" fill="none"/><g fill="#fff" stroke="#2d4469" stroke-width="0.9"><circle cx="12" cy="364" r="1.5"/><circle cx="17" cy="374" r="1.5"/><circle cx="21" cy="364" r="1.5"/><circle cx="26" cy="364" r="1.5"/></g>
<rect x="22" y="375" width="10" height="10" rx="2" fill="#5e9a5e" stroke="#3f7a3f" stroke-width="0.7"/><path d="M27.0 377v6M24 380.0h6" stroke="#fff" stroke-width="2"/>
<path d="M40 369h9l-4.5 4.5z" fill="#222"/>
<path d="M12 401c0-3 3-4 5-3 3 1 3 5 1 9-2 4-5 6-7 7l-1-1c2-2 4-4 4-6-2 0-3-1-3-3z" fill="#3d6aa8" stroke="#2d4a70" stroke-width="0.6"/>
<rect x="22" y="409" width="10" height="10" rx="2" fill="#5e9a5e" stroke="#3f7a3f" stroke-width="0.7"/><path d="M27.0 411v6M24 414.0h6" stroke="#fff" stroke-width="2"/>
<rect x="9.5" y="432.5" width="22" height="21" rx="2" fill="#a8c4e4" stroke="#4a6f9e" stroke-width="1"/><path d="M13 436l6 12 5-12h5" stroke="#2d4469" stroke-width="1.2" fill="none"/><g fill="#fff" stroke="#2d4469" stroke-width="0.8"><circle cx="13" cy="436" r="1.5"/><circle cx="19" cy="448" r="1.5"/><circle cx="24" cy="436" r="1.5"/><circle cx="29" cy="436" r="1.5"/></g>
<rect x="22" y="445" width="10" height="10" rx="2" fill="#5e9a5e" stroke="#3f7a3f" stroke-width="0.7"/><path d="M27.0 447v6M24 450.0h6" stroke="#fff" stroke-width="2"/>
<rect x="9.5" y="473.5" width="22" height="13" rx="1.5" fill="#4d86c8" stroke="#2d4a70" stroke-width="1"/><path d="M12 470v3M15 470v3M18 470v3M21 470v3M24 470v3M27 470v3M12 487v3M15 487v3" stroke="#2d4a70" stroke-width="1.1"/>
<rect x="22" y="481" width="10" height="10" rx="1.5" fill="#e0b020" stroke="#b08810" stroke-width="0.6"/><path d="M27 483v6M24 486h6M25 484l4 4M29 484l-4 4" stroke="#fff" stroke-width="1"/>
<path d="M40 478h9l-4.5 4.5z" fill="#222"/>
<rect x="0" y="497" width="58" height="1" fill="#b6b6b0"/><rect x="0" y="498" width="58" height="1" fill="#fbfbf9"/>
<rect x="23" y="503" width="1" height="7" fill="#9a9a96"/><rect x="24" y="503" width="1" height="7" fill="#fbfbf9"/><rect x="25" y="503" width="1" height="7" fill="#9a9a96"/><rect x="26" y="503" width="1" height="7" fill="#fbfbf9"/><rect x="27" y="503" width="1" height="7" fill="#9a9a96"/><rect x="28" y="503" width="1" height="7" fill="#fbfbf9"/><rect x="29" y="503" width="1" height="7" fill="#9a9a96"/><rect x="30" y="503" width="1" height="7" fill="#fbfbf9"/><rect x="31" y="503" width="1" height="7" fill="#9a9a96"/><rect x="32" y="503" width="1" height="7" fill="#fbfbf9"/>
<path d="M14 518l7 20M21 538l5-12" stroke="#4a6f9e" stroke-width="1.2"/><path d="M24 520h10l2 8-4 5-7 2z" fill="#fff" stroke="#333" stroke-width="1.1"/><path d="M25 538l5-14 5-2" stroke="#e02020" stroke-width="1.3" fill="none"/><g fill="#e02020"><circle cx="25" cy="538" r="1.6"/><circle cx="30" cy="524" r="1.6"/><circle cx="35" cy="522" r="1.6"/></g><g fill="#4a8ad0"><circle cx="33" cy="537" r="1.3"/><circle cx="36" cy="533" r="1.3"/></g>
<path d="M20 558c4-3 10-4 13-2 2 2 1 6-2 9l-9 7c-3 2-6 0-5-3z" fill="#5a86c0" stroke="#2d4a70" stroke-width="1.1"/><g fill="#f0d020" stroke="#8a7010" stroke-width="0.8"><circle cx="20" cy="556" r="2.2"/><circle cx="34" cy="554" r="2.2"/><circle cx="22" cy="570" r="2.2"/><circle cx="28" cy="563" r="2.2"/></g><path d="M30 572l3 4 7-9" stroke="#f0d020" stroke-width="2" fill="none"/><path d="M30 572l3 4 7-9" stroke="#333" stroke-width="0.6" fill="none"/>
<path d="M71 171c-3 0-5-2-4-4l4-4 6 6z" fill="#e03a2a"/><path d="M67 167l4-4 3 1-5 5z" fill="#4a86d8"/><path d="M70 164l3-3 2 1-4 3z" fill="#f0d020"/><path d="M71 172l5-6 2 1-3 5z" fill="#d8a870"/><path d="M74 167l7-7" stroke="#d8a040" stroke-width="2.5"/>
<path d="M95.5 166.5h8v9h-8z" fill="none" stroke="#777" stroke-width="1"/><path d="M98.5 162.5h8v10h-8z" fill="#f4f4f4" stroke="#777" stroke-width="1"/><path d="M102 158v8" stroke="#4a86d8" stroke-width="1.6"/><rect x="102" y="170" width="7" height="7" fill="#5aa85a" stroke="#fff" stroke-width="1"/>
<path d="M121 168c5-6 13-6 18 0c-5 6-13 6-18 0z" fill="#eee" stroke="#888" stroke-width="0.9"/><circle cx="130" cy="168" r="3.5" fill="#4a7ab8"/><circle cx="130" cy="168" r="1.4" fill="#112"/>
<path d="M137 169h9l-4.5 4.5z" fill="#111"/>
<path d="M156 160h15l-5.5 7v8l-4-2v-6z" fill="#5a8ac8" stroke="#3d66a0" stroke-width="0.8"/><rect x="156" y="159.5" width="15" height="2" fill="#f0d840"/>
<text x="183" y="174" font-family="Liberation Serif" font-size="16" fill="#9a9a9a">&#949;</text><rect x="191.5" y="168.5" width="7" height="8" fill="#ddd" stroke="#aaa" stroke-width="0.8"/>
<path d="M209 167h9l-4.5 4.5z" fill="#888"/>
<path d="M231.5 161.5h8M231.5 161.5v14M231.5 167.5h3M231.5 174.5h3" stroke="#777" stroke-width="0.9" fill="none"/><rect x="234" y="165.5" width="3.5" height="3.5" fill="#f08a20"/><rect x="234" y="172.5" width="3.5" height="3.5" fill="#f08a20"/><path d="M239 159h5v10h3l-5.5 6.5-5.5-6.5h3z" fill="#4a86d8" stroke="#2d5aa0" stroke-width="0.8"/>
<path d="M265 165l3.2 3-3.2 3M269.5 165l3.2 3-3.2 3" stroke="#000" stroke-width="1.6" fill="none"/>
<g transform="translate(600 708)"><path d="M9 18l7 8" stroke="#000" stroke-width="1"/><circle cx="16.5" cy="22" r="5.6" fill="#fff" stroke="#000" stroke-width="1.9"/><circle cx="16.8" cy="22.3" r="1.5" fill="none" stroke="#000" stroke-width="1.3"/><ellipse cx="10.8" cy="12.2" rx="5" ry="7.6" transform="rotate(-33 10.8 12.2)" fill="#fff" stroke="#000" stroke-width="2"/><ellipse cx="10.2" cy="11.8" rx="2.4" ry="4.8" transform="rotate(-33 10.2 11.8)" fill="#fff" stroke="#000" stroke-width="1.1"/><path d="M9.5 9.5L11.8 14.8" stroke="#000" stroke-width="1.5"/><g fill="#000"><circle cx="24.3" cy="6.8" r="1"/><circle cx="21.8" cy="9" r="0.9"/><circle cx="18.8" cy="9.6" r="0.9"/><circle cx="4.3" cy="20.5" r="0.9"/><circle cx="6.8" cy="18.8" r="0.8"/></g></g>
<path d="M796.5 723v-3.5a5 5 0 0 1 10 0v3.5" stroke="#8a8a8a" stroke-width="2.2" fill="none"/><rect x="793" y="723" width="17" height="12" rx="1.5" fill="#777"/>
<circle cx="1216" cy="725" r="9.5" fill="#d4d4d4" stroke="#6a6a6a" stroke-width="1.4"/><path d="M1206.5 725h19M1216 715.5v19M1209 719.5h14M1209 730.5h14" stroke="#6a6a6a" stroke-width="1"/><ellipse cx="1216" cy="725" rx="4.5" ry="9.5" fill="none" stroke="#6a6a6a" stroke-width="1.1"/>
<path d="M1341 714c6 0 10 3.5 10 8s-4 8-10 8c-1 0-2 0-3-.3l-1 3.3 -2-4c-3-1.5-5-4-5-7 0-4.5 4.5-8 11-8z" fill="#6a6a6a"/><circle cx="1336" cy="722" r="1.5" fill="#fff"/><circle cx="1341" cy="722" r="1.5" fill="#fff"/><circle cx="1346" cy="722" r="1.5" fill="#fff"/>
<defs><linearGradient id="gpress" x1="0" y1="0" x2="0" y2="1"><stop offset="0" stop-color="#d6d6d4"/><stop offset="1" stop-color="#ebebe9"/></linearGradient></defs>
</svg>
<!-- map canvas -->
<div class="a" style="left:282px;top:127px;width:807px;height:580px;background:#fff;border-left:1px solid #a0a09a;border-top:1px solid #a0a09a;border-right:1px solid #a0a09a"></div>
<svg class="a" style="left:283px;top:128px" width="805" height="578" viewBox="283 128 805 578">
<defs>
<clipPath id="cl"><path d="M362.0,372.3C362.7,365.3 361.5,347.8 361.2,340.8C360.9,333.8 359.6,332.6 360.3,330.3C361.0,328.0 363.4,329.6 365.5,326.8C367.6,324.0 370.6,317.2 372.6,313.7C374.7,310.2 374.9,308.3 377.8,305.8C380.7,303.3 388.1,301.4 390.0,298.8C391.9,296.2 389.8,293.2 389.2,290.4C388.6,287.6 386.3,284.2 386.7,282.0C387.1,279.8 389.8,277.3 391.6,277.1C393.4,276.9 395.8,278.7 397.6,280.7C399.4,282.7 399.3,286.4 402.5,289.2C405.7,292.0 412.8,297.5 417.0,297.7C421.2,297.9 424.6,292.0 428.0,290.4C431.4,288.8 435.3,287.0 437.7,288.0C440.1,289.0 439.9,294.9 442.5,296.5C445.1,298.1 448.9,298.3 453.5,297.7C458.1,297.1 464.8,294.6 470.4,292.9C476.0,291.2 481.9,288.4 487.4,287.5C492.9,286.6 499.8,289.2 503.2,287.5C506.6,285.8 507.1,285.5 508.0,277.1C508.9,268.7 507.6,245.2 508.8,237.1C510.0,229.0 511.6,230.2 515.3,228.6C519.0,227.0 527.0,228.1 531.1,227.4C535.2,226.7 536.0,224.2 539.6,224.4C543.2,224.6 549.6,227.1 553.0,228.6C556.4,230.1 556.0,232.8 560.0,233.4C564.0,234.0 569.9,232.2 577.0,232.2C584.1,232.2 597.2,232.6 602.5,233.4C607.8,234.2 607.1,235.3 608.5,237.1C609.9,238.9 609.6,242.5 611.0,244.3C612.4,246.1 615.0,247.6 617.0,248.0C619.0,248.4 622.3,248.2 623.1,246.8C623.9,245.4 623.5,242.1 621.9,239.5C620.3,236.9 615.0,233.6 613.4,231.0C611.8,228.4 610.6,225.5 612.2,223.7C613.8,221.9 617.6,221.5 623.1,220.1C628.6,218.7 640.1,216.9 645.0,215.2C649.9,213.5 649.0,210.8 652.2,209.9C655.4,209.0 662.1,212.1 664.3,209.9C666.5,207.8 666.2,200.0 665.5,197.0C664.8,194.0 661.9,193.7 660.0,192.0C658.1,190.3 655.4,189.2 654.0,187.0C652.6,184.8 652.4,181.8 651.5,179.0C650.6,176.2 649.0,173.0 648.5,170.0C648.0,167.0 647.7,163.2 648.3,161.0C648.9,158.8 646.5,157.8 652.0,157.0C657.5,156.2 672.4,157.1 681.3,156.5C690.2,155.9 697.9,154.6 705.6,153.3C713.3,152.0 721.7,147.9 727.4,148.5C733.1,149.1 737.0,154.0 739.6,157.0C742.2,160.0 743.2,163.1 743.2,166.7C743.2,170.3 739.0,174.6 739.6,178.8C740.2,183.1 742.8,188.3 746.8,192.2C750.8,196.0 760.5,198.5 763.8,201.9C767.0,205.3 766.7,208.6 766.3,212.8C765.9,217.1 762.4,222.6 761.4,227.4C760.4,232.2 759.2,237.5 760.2,241.9C761.2,246.3 763.9,251.6 767.5,254.0C771.1,256.4 779.2,254.5 782.0,256.5C784.8,258.5 784.9,263.0 784.5,266.2C784.1,269.4 780.8,271.9 779.6,275.9C778.4,279.9 778.6,287.2 777.2,290.4C775.8,293.6 773.7,293.7 771.1,295.3C768.5,296.9 763.0,298.2 761.4,300.2C759.8,302.2 760.2,305.6 761.4,307.4C762.6,309.2 765.9,311.5 768.7,311.1C771.5,310.7 773.2,307.8 778.4,305.0C783.6,302.2 794.8,297.7 800.0,294.1C805.2,290.6 806.9,286.4 809.7,283.7C812.5,281.0 815.9,283.1 817.0,277.7C818.1,272.2 815.9,255.9 816.5,251.0C817.1,246.1 817.3,248.5 820.6,248.5C823.9,248.5 832.8,249.4 836.4,251.0C840.0,252.6 840.1,255.0 842.5,258.2C844.9,261.4 849.6,265.9 851.0,270.4C852.4,274.9 851.4,280.6 851.0,285.0C850.6,289.4 848.1,293.4 848.5,297.0C848.9,300.6 850.8,304.6 853.4,306.8C856.0,309.0 861.7,308.0 864.3,310.4C866.9,312.8 867.0,317.4 869.2,321.3C871.4,325.2 873.9,331.1 877.7,333.5C881.5,335.9 889.0,334.1 892.2,335.9C895.4,337.7 894.6,342.0 897.0,344.4C899.4,346.8 904.4,348.2 906.8,350.4C909.2,352.6 909.6,355.4 911.6,357.7C913.6,360.0 915.7,361.2 918.9,364.3C922.1,367.4 927.4,373.6 931.0,376.4C934.6,379.2 937.9,379.7 940.7,381.3C943.5,382.9 945.8,384.1 948.0,386.1C950.2,388.1 951.7,391.4 954.1,393.4C956.5,395.3 959.2,397.0 962.6,397.8C966.0,398.6 970.1,396.9 974.7,398.2C979.4,399.5 990.5,402.7 990.5,405.5C990.5,408.3 978.0,412.0 974.7,415.2C971.5,418.4 971.6,420.8 971.0,424.9C970.4,428.9 972.8,435.6 971.0,439.5C969.2,443.4 962.4,444.8 960.2,448.0C958.0,451.2 957.5,455.9 957.7,458.9C957.9,461.9 955.3,464.9 961.4,466.2C967.5,467.5 985.0,468.1 994.1,466.7C1003.2,465.3 1010.5,457.4 1016.0,457.7C1021.5,458.0 1025.1,465.6 1026.9,468.6C1028.7,471.6 1028.3,472.7 1026.9,475.9C1025.5,479.1 1020.6,483.1 1018.4,488.0C1016.2,492.9 1015.0,499.2 1013.5,505.0C1012.0,510.8 1009.4,517.9 1009.2,523.0C1009.0,528.1 1015.1,531.8 1012.3,535.4C1009.5,539.0 994.1,541.0 992.3,544.6C990.5,548.2 1000.2,551.4 1001.5,557.0C1002.8,562.6 1001.3,573.9 1000.0,578.5C998.7,583.1 999.2,586.6 993.8,584.6C988.4,582.6 976.2,570.1 967.7,566.2C959.2,562.4 951.2,561.2 943.0,561.5C934.8,561.8 924.6,563.1 918.5,567.7C912.4,572.3 909.5,585.6 906.2,589.2C902.9,592.8 901.1,585.4 898.5,589.2C895.9,593.1 893.4,605.4 890.8,612.3C888.2,619.2 887.6,625.7 883.0,630.8C878.4,635.9 865.3,640.2 863.0,643.0C860.7,645.8 870.7,646.2 869.2,647.7C867.7,649.2 858.4,649.8 853.8,652.3C849.2,654.8 846.1,662.5 841.5,663.0C836.9,663.5 830.3,655.1 826.2,655.4C822.1,655.7 820.1,660.2 817.0,664.6C813.9,669.0 813.4,677.1 807.7,681.5C802.0,685.9 788.6,689.2 783.0,690.8C777.4,692.3 777.4,693.4 773.8,690.8C770.2,688.2 765.6,678.2 761.5,675.4C757.4,672.6 753.8,672.3 749.2,673.8C744.6,675.3 745.1,684.1 733.8,684.6C722.5,685.1 691.4,679.3 681.5,677.0C671.6,674.7 677.7,674.6 674.5,671.0C671.3,667.4 668.6,657.7 662.4,655.6C656.2,653.5 643.7,659.2 637.1,658.5C630.5,657.8 628.0,651.1 622.9,651.2C617.8,651.3 611.5,656.0 606.4,659.0C601.2,662.0 596.0,667.8 592.0,669.5C588.0,671.2 586.8,670.0 582.2,669.5C577.6,669.0 570.3,668.4 564.6,666.6C558.9,664.9 552.3,662.4 548.1,659.0C543.9,655.6 543.1,647.8 539.3,646.2C535.4,644.7 529.6,649.1 525.0,649.7C520.4,650.4 517.0,649.7 511.9,650.1C506.8,650.5 498.5,652.3 494.3,652.3C490.1,652.3 489.2,649.9 486.6,650.1C484.0,650.3 481.1,650.8 478.9,653.4C476.7,656.0 475.4,663.3 473.4,665.5C471.4,667.7 471.8,671.4 466.8,666.6C461.9,661.9 450.1,642.5 443.7,637.0C437.3,631.5 432.8,635.3 428.4,633.6C424.0,631.9 421.1,628.3 417.4,627.0C413.7,625.7 410.4,627.8 406.4,626.0C402.4,624.2 397.6,618.4 393.2,616.0C388.8,613.6 383.3,612.5 380.0,611.6C376.7,610.7 378.0,611.2 373.4,610.5C368.8,609.8 357.1,609.5 352.6,607.5C348.2,605.5 345.7,601.1 346.7,598.6C347.7,596.1 354.1,594.7 358.5,592.7C362.9,590.7 368.3,588.1 373.4,586.7C378.4,585.3 384.9,585.9 388.8,584.2C392.7,582.5 395.4,580.5 396.5,576.5C397.6,572.5 396.5,565.2 395.6,560.0C394.7,554.8 393.8,550.4 391.1,545.2C388.4,540.0 383.2,531.9 379.3,528.9C375.4,525.9 370.1,529.2 367.4,527.5C364.7,525.8 364.5,521.6 363.0,518.6C361.5,515.6 362.0,511.9 358.5,509.7C355.0,507.5 346.4,509.1 342.2,505.2C338.0,501.2 335.0,491.7 333.3,486.0C331.6,480.3 330.4,474.8 331.9,471.1C333.4,467.4 340.7,468.1 342.2,463.7C343.7,459.3 342.4,450.2 340.7,444.5C339.0,438.8 333.1,434.6 331.9,429.6C330.7,424.7 331.5,417.6 333.3,414.8C335.1,412.0 339.3,414.1 342.8,412.6C346.3,411.1 351.6,408.8 354.2,405.6C356.8,402.4 358.1,397.2 358.5,393.4C358.9,389.6 356.2,386.4 356.8,382.9C357.4,379.4 361.3,379.3 362.0,372.3Z"/></clipPath>
<filter id="bl" x="-5%" y="-5%" width="110%" height="110%"><feGaussianBlur stdDeviation="0.8"/></filter>
<filter id="bl2" x="-50%" y="-50%" width="200%" height="200%"><feGaussianBlur stdDeviation="1.6"/></filter>
</defs>
<g clip-path="url(#cl)">
<path fill="#440154" d="M362.0,372.3C362.7,365.3 361.5,347.8 361.2,340.8C360.9,333.8 359.6,332.6 360.3,330.3C361.0,328.0 363.4,329.6 365.5,326.8C367.6,324.0 370.6,317.2 372.6,313.7C374.7,310.2 374.9,308.3 377.8,305.8C380.7,303.3 388.1,301.4 390.0,298.8C391.9,296.2 389.8,293.2 389.2,290.4C388.6,287.6 386.3,284.2 386.7,282.0C387.1,279.8 389.8,277.3 391.6,277.1C393.4,276.9 395.8,278.7 397.6,280.7C399.4,282.7 399.3,286.4 402.5,289.2C405.7,292.0 412.8,297.5 417.0,297.7C421.2,297.9 424.6,292.0 428.0,290.4C431.4,288.8 435.3,287.0 437.7,288.0C440.1,289.0 439.9,294.9 442.5,296.5C445.1,298.1 448.9,298.3 453.5,297.7C458.1,297.1 464.8,294.6 470.4,292.9C476.0,291.2 481.9,288.4 487.4,287.5C492.9,286.6 499.8,289.2 503.2,287.5C506.6,285.8 507.1,285.5 508.0,277.1C508.9,268.7 507.6,245.2 508.8,237.1C510.0,229.0 511.6,230.2 515.3,228.6C519.0,227.0 527.0,228.1 531.1,227.4C535.2,226.7 536.0,224.2 539.6,224.4C543.2,224.6 549.6,227.1 553.0,228.6C556.4,230.1 556.0,232.8 560.0,233.4C564.0,234.0 569.9,232.2 577.0,232.2C584.1,232.2 597.2,232.6 602.5,233.4C607.8,234.2 607.1,235.3 608.5,237.1C609.9,238.9 609.6,242.5 611.0,244.3C612.4,246.1 615.0,247.6 617.0,248.0C619.0,248.4 622.3,248.2 623.1,246.8C623.9,245.4 623.5,242.1 621.9,239.5C620.3,236.9 615.0,233.6 613.4,231.0C611.8,228.4 610.6,225.5 612.2,223.7C613.8,221.9 617.6,221.5 623.1,220.1C628.6,218.7 640.1,216.9 645.0,215.2C649.9,213.5 649.0,210.8 652.2,209.9C655.4,209.0 662.1,212.1 664.3,209.9C666.5,207.8 666.2,200.0 665.5,197.0C664.8,194.0 661.9,193.7 660.0,192.0C658.1,190.3 655.4,189.2 654.0,187.0C652.6,184.8 652.4,181.8 651.5,179.0C650.6,176.2 649.0,173.0 648.5,170.0C648.0,167.0 647.7,163.2 648.3,161.0C648.9,158.8 646.5,157.8 652.0,157.0C657.5,156.2 672.4,157.1 681.3,156.5C690.2,155.9 697.9,154.6 705.6,153.3C713.3,152.0 721.7,147.9 727.4,148.5C733.1,149.1 737.0,154.0 739.6,157.0C742.2,160.0 743.2,163.1 743.2,166.7C743.2,170.3 739.0,174.6 739.6,178.8C740.2,183.1 742.8,188.3 746.8,192.2C750.8,196.0 760.5,198.5 763.8,201.9C767.0,205.3 766.7,208.6 766.3,212.8C765.9,217.1 762.4,222.6 761.4,227.4C760.4,232.2 759.2,237.5 760.2,241.9C761.2,246.3 763.9,251.6 767.5,254.0C771.1,256.4 779.2,254.5 782.0,256.5C784.8,258.5 784.9,263.0 784.5,266.2C784.1,269.4 780.8,271.9 779.6,275.9C778.4,279.9 778.6,287.2 777.2,290.4C775.8,293.6 773.7,293.7 771.1,295.3C768.5,296.9 763.0,298.2 761.4,300.2C759.8,302.2 760.2,305.6 761.4,307.4C762.6,309.2 765.9,311.5 768.7,311.1C771.5,310.7 773.2,307.8 778.4,305.0C783.6,302.2 794.8,297.7 800.0,294.1C805.2,290.6 806.9,286.4 809.7,283.7C812.5,281.0 815.9,283.1 817.0,277.7C818.1,272.2 815.9,255.9 816.5,251.0C817.1,246.1 817.3,248.5 820.6,248.5C823.9,248.5 832.8,249.4 836.4,251.0C840.0,252.6 840.1,255.0 842.5,258.2C844.9,261.4 849.6,265.9 851.0,270.4C852.4,274.9 851.4,280.6 851.0,285.0C850.6,289.4 848.1,293.4 848.5,297.0C848.9,300.6 850.8,304.6 853.4,306.8C856.0,309.0 861.7,308.0 864.3,310.4C866.9,312.8 867.0,317.4 869.2,321.3C871.4,325.2 873.9,331.1 877.7,333.5C881.5,335.9 889.0,334.1 892.2,335.9C895.4,337.7 894.6,342.0 897.0,344.4C899.4,346.8 904.4,348.2 906.8,350.4C909.2,352.6 909.6,355.4 911.6,357.7C913.6,360.0 915.7,361.2 918.9,364.3C922.1,367.4 927.4,373.6 931.0,376.4C934.6,379.2 937.9,379.7 940.7,381.3C943.5,382.9 945.8,384.1 948.0,386.1C950.2,388.1 951.7,391.4 954.1,393.4C956.5,395.3 959.2,397.0 962.6,397.8C966.0,398.6 970.1,396.9 974.7,398.2C979.4,399.5 990.5,402.7 990.5,405.5C990.5,408.3 978.0,412.0 974.7,415.2C971.5,418.4 971.6,420.8 971.0,424.9C970.4,428.9 972.8,435.6 971.0,439.5C969.2,443.4 962.4,444.8 960.2,448.0C958.0,451.2 957.5,455.9 957.7,458.9C957.9,461.9 955.3,464.9 961.4,466.2C967.5,467.5 985.0,468.1 994.1,466.7C1003.2,465.3 1010.5,457.4 1016.0,457.7C1021.5,458.0 1025.1,465.6 1026.9,468.6C1028.7,471.6 1028.3,472.7 1026.9,475.9C1025.5,479.1 1020.6,483.1 1018.4,488.0C1016.2,492.9 1015.0,499.2 1013.5,505.0C1012.0,510.8 1009.4,517.9 1009.2,523.0C1009.0,528.1 1015.1,531.8 1012.3,535.4C1009.5,539.0 994.1,541.0 992.3,544.6C990.5,548.2 1000.2,551.4 1001.5,557.0C1002.8,562.6 1001.3,573.9 1000.0,578.5C998.7,583.1 999.2,586.6 993.8,584.6C988.4,582.6 976.2,570.1 967.7,566.2C959.2,562.4 951.2,561.2 943.0,561.5C934.8,561.8 924.6,563.1 918.5,567.7C912.4,572.3 909.5,585.6 906.2,589.2C902.9,592.8 901.1,585.4 898.5,589.2C895.9,593.1 893.4,605.4 890.8,612.3C888.2,619.2 887.6,625.7 883.0,630.8C878.4,635.9 865.3,640.2 863.0,643.0C860.7,645.8 870.7,646.2 869.2,647.7C867.7,649.2 858.4,649.8 853.8,652.3C849.2,654.8 846.1,662.5 841.5,663.0C836.9,663.5 830.3,655.1 826.2,655.4C822.1,655.7 820.1,660.2 817.0,664.6C813.9,669.0 813.4,677.1 807.7,681.5C802.0,685.9 788.6,689.2 783.0,690.8C777.4,692.3 777.4,693.4 773.8,690.8C770.2,688.2 765.6,678.2 761.5,675.4C757.4,672.6 753.8,672.3 749.2,673.8C744.6,675.3 745.1,684.1 733.8,684.6C722.5,685.1 691.4,679.3 681.5,677.0C671.6,674.7 677.7,674.6 674.5,671.0C671.3,667.4 668.6,657.7 662.4,655.6C656.2,653.5 643.7,659.2 637.1,658.5C630.5,657.8 628.0,651.1 622.9,651.2C617.8,651.3 611.5,656.0 606.4,659.0C601.2,662.0 596.0,667.8 592.0,669.5C588.0,671.2 586.8,670.0 582.2,669.5C577.6,669.0 570.3,668.4 564.6,666.6C558.9,664.9 552.3,662.4 548.1,659.0C543.9,655.6 543.1,647.8 539.3,646.2C535.4,644.7 529.6,649.1 525.0,649.7C520.4,650.4 517.0,649.7 511.9,650.1C506.8,650.5 498.5,652.3 494.3,652.3C490.1,652.3 489.2,649.9 486.6,650.1C484.0,650.3 481.1,650.8 478.9,653.4C476.7,656.0 475.4,663.3 473.4,665.5C471.4,667.7 471.8,671.4 466.8,666.6C461.9,661.9 450.1,642.5 443.7,637.0C437.3,631.5 432.8,635.3 428.4,633.6C424.0,631.9 421.1,628.3 417.4,627.0C413.7,625.7 410.4,627.8 406.4,626.0C402.4,624.2 397.6,618.4 393.2,616.0C388.8,613.6 383.3,612.5 380.0,611.6C376.7,610.7 378.0,611.2 373.4,610.5C368.8,609.8 357.1,609.5 352.6,607.5C348.2,605.5 345.7,601.1 346.7,598.6C347.7,596.1 354.1,594.7 358.5,592.7C362.9,590.7 368.3,588.1 373.4,586.7C378.4,585.3 384.9,585.9 388.8,584.2C392.7,582.5 395.4,580.5 396.5,576.5C397.6,572.5 396.5,565.2 395.6,560.0C394.7,554.8 393.8,550.4 391.1,545.2C388.4,540.0 383.2,531.9 379.3,528.9C375.4,525.9 370.1,529.2 367.4,527.5C364.7,525.8 364.5,521.6 363.0,518.6C361.5,515.6 362.0,511.9 358.5,509.7C355.0,507.5 346.4,509.1 342.2,505.2C338.0,501.2 335.0,491.7 333.3,486.0C331.6,480.3 330.4,474.8 331.9,471.1C333.4,467.4 340.7,468.1 342.2,463.7C343.7,459.3 342.4,450.2 340.7,444.5C339.0,438.8 333.1,434.6 331.9,429.6C330.7,424.7 331.5,417.6 333.3,414.8C335.1,412.0 339.3,414.1 342.8,412.6C346.3,411.1 351.6,408.8 354.2,405.6C356.8,402.4 358.1,397.2 358.5,393.4C358.9,389.6 356.2,386.4 356.8,382.9C357.4,379.4 361.3,379.3 362.0,372.3Z"/>
<g filter="url(#bl)" fill="none" stroke-linejoin="round" stroke-linecap="round">
<polyline transform="translate(0,450.0) scale(1,1.3514) translate(0,-450.0)" stroke="#46085c" fill="none" stroke-width="74.00" points="469.0,316.8 466.0,339.0 463.0,361.2 459.0,377.5 455.0,389.3 450.0,398.2 448.0,411.5 446.0,427.8 443.0,447.8"/>
<polyline transform="translate(0,450.0) scale(1,1.3514) translate(0,-450.0)" stroke="#46085c" fill="none" stroke-width="74.00" points="300.0,458.9 349.0,455.6 386.0,452.2 422.0,447.0 438.6,448.1 527.5,449.3 616.4,442.6 654.0,435.2 683.0,428.5 700.0,424.8"/>
<polyline transform="translate(0,450.0) scale(1,1.3514) translate(0,-450.0)" stroke="#46085c" fill="none" stroke-width="74.00" points="352.0,455.2 334.0,467.8 318.0,481.1"/>
<polyline transform="translate(0,450.0) scale(1,1.3514) translate(0,-450.0)" stroke="#46085c" fill="none" stroke-width="74.00" points="500.0,294.6 510.5,298.3 526.3,302.2 543.8,312.6 570.0,315.2 596.3,316.4 613.8,321.6 619.0,330.7 622.6,341.1 640.0,348.8 657.6,355.3 668.0,363.1 681.6,381.3 692.0,402.3 698.0,416.0 701.8,424.1"/>
<polyline transform="translate(0,450.0) scale(1,1.3514) translate(0,-450.0)" stroke="#46085c" fill="none" stroke-width="62.90" points="627.0,279.8 626.0,285.4 620.8,308.7 614.0,320.5"/>
<polyline transform="translate(0,450.0) scale(1,1.3514) translate(0,-450.0)" stroke="#46085c" fill="none" stroke-width="62.90" points="850.0,294.6 837.7,309.0 830.4,323.3 816.0,339.0 806.8,357.0 797.1,374.9 780.9,389.3 761.5,398.9 740.5,408.5 716.2,416.8 700.0,422.8"/>
<polyline transform="translate(0,450.0) scale(1,1.3514) translate(0,-450.0)" stroke="#46085c" fill="none" stroke-width="74.00" points="683.0,427.8 678.5,452.1 679.0,470.0 681.0,479.6 680.0,495.9 680.0,517.3 679.5,538.1 677.0,552.9 674.0,569.1 667.0,586.2 661.0,601.0 655.0,620.2"/>
<polyline transform="translate(0,450.0) scale(1,1.3171) translate(0,-450.0)" stroke="#46085c" fill="none" stroke-width="82.00" points="705.0,436.3 722.0,448.5 740.0,460.6 757.0,472.0 790.0,483.4 838.0,488.0 870.0,488.7 900.0,487.2 930.0,483.4"/>
<polyline transform="translate(0,450.0) scale(1,1.3514) translate(0,-450.0)" stroke="#46085c" fill="none" stroke-width="74.00" points="930.0,372.3 917.8,382.6 898.4,395.2 888.2,401.9 882.3,415.7 879.3,442.1 876.3,464.1 875.0,481.1"/>
<polyline transform="translate(0,450.0) scale(1,1.3514) translate(0,-450.0)" stroke="#46085c" fill="none" stroke-width="74.00" points="1000.0,413.0 986.0,416.8 962.3,431.1 944.5,448.7 923.8,464.1 920.8,481.6 920.8,503.5 919.3,525.5 914.9,538.6 912.0,544.7"/>
<polyline transform="translate(0,450.0) scale(1,1.3514) translate(0,-450.0)" stroke="#46085c" fill="#46085c" stroke-width="74.00" points="644.0,432.2 691.0,424.8 712.0,432.2 737.0,447.8 735.0,460.4 686.0,473.7 660.0,461.8 643.0,442.6 644.0,432.2"/>
<polyline transform="translate(0,450.0) scale(1,1.3514) translate(0,-450.0)" stroke="#46085c" fill="none" stroke-width="74.00" points="802.0,617.2 802.5,617.6"/>
<polyline transform="translate(0,450.0) scale(1,1.3512) translate(0,-450.0)" stroke="#481a6c" fill="none" stroke-width="71.05" points="469.0,316.8 466.0,339.0 463.0,361.2 459.0,377.5 455.0,389.3 450.0,398.2 448.0,411.5 446.0,427.8 443.0,447.8"/>
<polyline transform="translate(0,450.0) scale(1,1.3512) translate(0,-450.0)" stroke="#481a6c" fill="none" stroke-width="71.05" points="300.0,458.9 349.0,455.6 386.0,452.2 422.0,447.0 438.6,448.1 527.5,449.3 616.4,442.6 654.0,435.2 683.0,428.5 700.0,424.8"/>
<polyline transform="translate(0,450.0) scale(1,1.3512) translate(0,-450.0)" stroke="#481a6c" fill="none" stroke-width="71.05" points="352.0,455.2 334.0,467.8 318.0,481.1"/>
<polyline transform="translate(0,450.0) scale(1,1.3512) translate(0,-450.0)" stroke="#481a6c" fill="none" stroke-width="71.05" points="500.0,294.6 510.5,298.3 526.3,302.2 543.8,312.6 570.0,315.2 596.3,316.4 613.8,321.6 619.0,330.7 622.6,341.1 640.0,348.8 657.6,355.3 668.0,363.1 681.6,381.2 692.0,402.3 698.0,416.0 701.8,424.1"/>
<polyline transform="translate(0,450.0) scale(1,1.3512) translate(0,-450.0)" stroke="#481a6c" fill="none" stroke-width="60.45" points="627.0,279.8 626.0,285.3 620.8,308.6 614.0,320.5"/>
<polyline transform="translate(0,450.0) scale(1,1.3512) translate(0,-450.0)" stroke="#481a6c" fill="none" stroke-width="60.45" points="850.0,294.6 837.7,308.9 830.4,323.3 816.0,339.0 806.8,357.0 797.1,374.9 780.9,389.3 761.5,398.9 740.5,408.5 716.2,416.8 700.0,422.8"/>
<polyline transform="translate(0,450.0) scale(1,1.3512) translate(0,-450.0)" stroke="#481a6c" fill="none" stroke-width="71.05" points="683.0,427.8 678.5,452.1 679.0,470.0 681.0,479.6 680.0,495.9 680.0,517.3 679.5,538.1 677.0,552.9 674.0,569.1 667.0,586.2 661.0,601.0 655.0,620.2"/>
<polyline transform="translate(0,450.0) scale(1,1.3157) translate(0,-450.0)" stroke="#481a6c" fill="none" stroke-width="79.05" points="705.0,436.3 722.0,448.5 740.0,460.6 757.0,472.0 790.0,483.4 838.0,488.0 870.0,488.8 900.0,487.2 930.0,483.4"/>
<polyline transform="translate(0,450.0) scale(1,1.3512) translate(0,-450.0)" stroke="#481a6c" fill="none" stroke-width="71.05" points="930.0,372.3 917.8,382.6 898.4,395.2 888.2,401.9 882.3,415.7 879.3,442.1 876.3,464.1 875.0,481.1"/>
<polyline transform="translate(0,450.0) scale(1,1.3512) translate(0,-450.0)" stroke="#481a6c" fill="none" stroke-width="71.05" points="1000.0,413.0 986.0,416.8 962.3,431.1 944.5,448.7 923.8,464.1 920.8,481.6 920.8,503.5 919.3,525.5 914.9,538.6 912.0,544.7"/>
<polyline transform="translate(0,450.0) scale(1,1.3512) translate(0,-450.0)" stroke="#481a6c" fill="#481a6c" stroke-width="71.05" points="644.0,432.2 691.0,424.8 712.0,432.2 737.0,447.8 735.0,460.4 686.0,473.7 660.0,461.8 643.0,442.6 644.0,432.2"/>
<polyline transform="translate(0,450.0) scale(1,1.3512) translate(0,-450.0)" stroke="#481a6c" fill="none" stroke-width="71.05" points="802.0,617.3 802.5,617.6"/>
<polyline transform="translate(0,450.0) scale(1,1.3511) translate(0,-450.0)" stroke="#482979" fill="none" stroke-width="68.09" points="469.0,316.8 466.0,339.0 463.0,361.2 459.0,377.5 455.0,389.3 450.0,398.2 448.0,411.5 446.0,427.8 443.0,447.8"/>
<polyline transform="translate(0,450.0) scale(1,1.3511) translate(0,-450.0)" stroke="#482979" fill="none" stroke-width="68.09" points="300.0,458.9 349.0,455.6 386.0,452.2 422.0,447.0 438.6,448.1 527.5,449.3 616.4,442.6 654.0,435.2 683.0,428.5 700.0,424.8"/>
<polyline transform="translate(0,450.0) scale(1,1.3511) translate(0,-450.0)" stroke="#482979" fill="none" stroke-width="68.09" points="352.0,455.2 334.0,467.8 318.0,481.1"/>
<polyline transform="translate(0,450.0) scale(1,1.3511) translate(0,-450.0)" stroke="#482979" fill="none" stroke-width="68.09" points="500.0,294.6 510.5,298.3 526.3,302.2 543.8,312.6 570.0,315.2 596.3,316.4 613.8,321.6 619.0,330.7 622.6,341.1 640.0,348.8 657.6,355.3 668.0,363.1 681.6,381.2 692.0,402.3 698.0,416.0 701.8,424.1"/>
<polyline transform="translate(0,450.0) scale(1,1.3511) translate(0,-450.0)" stroke="#482979" fill="none" stroke-width="58.00" points="627.0,279.8 626.0,285.3 620.8,308.6 614.0,320.5"/>
<polyline transform="translate(0,450.0) scale(1,1.3511) translate(0,-450.0)" stroke="#482979" fill="none" stroke-width="58.00" points="850.0,294.6 837.7,308.9 830.4,323.3 816.0,339.0 806.8,357.0 797.1,374.9 780.9,389.3 761.5,398.9 740.5,408.5 716.2,416.8 700.0,422.8"/>
<polyline transform="translate(0,450.0) scale(1,1.3511) translate(0,-450.0)" stroke="#482979" fill="none" stroke-width="68.09" points="683.0,427.8 678.5,452.1 679.0,470.0 681.0,479.6 680.0,495.9 680.0,517.4 679.5,538.1 677.0,552.9 674.0,569.2 667.0,586.2 661.0,601.0 655.0,620.2"/>
<polyline transform="translate(0,450.0) scale(1,1.3142) translate(0,-450.0)" stroke="#482979" fill="none" stroke-width="76.09" points="705.0,436.3 722.0,448.5 740.0,460.7 757.0,472.1 790.0,483.5 838.0,488.0 870.0,488.8 900.0,487.3 930.0,483.5"/>
<polyline transform="translate(0,450.0) scale(1,1.3511) translate(0,-450.0)" stroke="#482979" fill="none" stroke-width="68.09" points="930.0,372.3 917.8,382.6 898.4,395.2 888.2,401.9 882.3,415.7 879.3,442.1 876.3,464.1 875.0,481.1"/>
<polyline transform="translate(0,450.0) scale(1,1.3511) translate(0,-450.0)" stroke="#482979" fill="none" stroke-width="68.09" points="1000.0,413.0 986.0,416.8 962.3,431.1 944.5,448.7 923.8,464.1 920.8,481.6 920.8,503.5 919.3,525.5 914.9,538.6 912.0,544.7"/>
<polyline transform="translate(0,450.0) scale(1,1.3511) translate(0,-450.0)" stroke="#482979" fill="#482979" stroke-width="68.09" points="644.0,432.2 691.0,424.8 712.0,432.2 737.0,447.8 735.0,460.4 686.0,473.7 660.0,461.8 643.0,442.6 644.0,432.2"/>
<polyline transform="translate(0,450.0) scale(1,1.3511) translate(0,-450.0)" stroke="#482979" fill="none" stroke-width="68.09" points="802.0,617.3 802.5,617.6"/>
<polyline transform="translate(0,450.0) scale(1,1.3510) translate(0,-450.0)" stroke="#453781" fill="none" stroke-width="65.14" points="469.0,316.8 466.0,339.0 463.0,361.2 459.0,377.5 455.0,389.3 450.0,398.2 448.0,411.5 446.0,427.8 443.0,447.8"/>
<polyline transform="translate(0,450.0) scale(1,1.3510) translate(0,-450.0)" stroke="#453781" fill="none" stroke-width="65.14" points="300.0,458.9 349.0,455.6 386.0,452.2 422.0,447.0 438.6,448.1 527.5,449.3 616.4,442.6 654.0,435.2 683.0,428.5 700.0,424.8"/>
<polyline transform="translate(0,450.0) scale(1,1.3510) translate(0,-450.0)" stroke="#453781" fill="none" stroke-width="65.14" points="352.0,455.2 334.0,467.8 318.0,481.1"/>
<polyline transform="translate(0,450.0) scale(1,1.3510) translate(0,-450.0)" stroke="#453781" fill="none" stroke-width="65.14" points="500.0,294.6 510.5,298.3 526.3,302.2 543.8,312.5 570.0,315.1 596.3,316.4 613.8,321.6 619.0,330.7 622.6,341.0 640.0,348.8 657.6,355.3 668.0,363.1 681.6,381.2 692.0,402.3 698.0,416.0 701.8,424.1"/>
<polyline transform="translate(0,450.0) scale(1,1.3510) translate(0,-450.0)" stroke="#453781" fill="none" stroke-width="55.55" points="627.0,279.7 626.0,285.3 620.8,308.6 614.0,320.5"/>
<polyline transform="translate(0,450.0) scale(1,1.3510) translate(0,-450.0)" stroke="#453781" fill="none" stroke-width="55.55" points="850.0,294.6 837.7,308.9 830.4,323.3 816.0,339.0 806.8,357.0 797.1,374.9 780.9,389.3 761.5,398.9 740.5,408.5 716.2,416.8 700.0,422.8"/>
<polyline transform="translate(0,450.0) scale(1,1.3510) translate(0,-450.0)" stroke="#453781" fill="none" stroke-width="65.14" points="683.0,427.8 678.5,452.1 679.0,470.0 681.0,479.6 680.0,495.9 680.0,517.4 679.5,538.1 677.0,552.9 674.0,569.2 667.0,586.2 661.0,601.0 655.0,620.2"/>
<polyline transform="translate(0,450.0) scale(1,1.3126) translate(0,-450.0)" stroke="#453781" fill="none" stroke-width="73.14" points="705.0,436.3 722.0,448.5 740.0,460.7 757.0,472.1 790.0,483.5 838.0,488.1 870.0,488.9 900.0,487.3 930.0,483.5"/>
<polyline transform="translate(0,450.0) scale(1,1.3510) translate(0,-450.0)" stroke="#453781" fill="none" stroke-width="65.14" points="930.0,372.3 917.8,382.6 898.4,395.2 888.2,401.9 882.3,415.7 879.3,442.1 876.3,464.1 875.0,481.1"/>
<polyline transform="translate(0,450.0) scale(1,1.3510) translate(0,-450.0)" stroke="#453781" fill="none" stroke-width="65.14" points="1000.0,413.0 986.0,416.8 962.3,431.1 944.5,448.7 923.8,464.1 920.8,481.6 920.8,503.5 919.3,525.5 914.9,538.6 912.0,544.7"/>
<polyline transform="translate(0,450.0) scale(1,1.3510) translate(0,-450.0)" stroke="#453781" fill="#453781" stroke-width="65.14" points="644.0,432.2 691.0,424.8 712.0,432.2 737.0,447.8 735.0,460.4 686.0,473.7 660.0,461.8 643.0,442.6 644.0,432.2"/>
<polyline transform="translate(0,450.0) scale(1,1.3510) translate(0,-450.0)" stroke="#453781" fill="none" stroke-width="65.14" points="802.0,617.3 802.5,617.7"/>
<polyline transform="translate(0,450.0) scale(1,1.3509) translate(0,-450.0)" stroke="#404588" fill="none" stroke-width="62.18" points="469.0,316.8 466.0,339.0 463.0,361.2 459.0,377.5 455.0,389.3 450.0,398.2 448.0,411.5 446.0,427.8 443.0,447.8"/>
<polyline transform="translate(0,450.0) scale(1,1.3509) translate(0,-450.0)" stroke="#404588" fill="none" stroke-width="62.18" points="300.0,458.9 349.0,455.6 386.0,452.2 422.0,447.0 438.6,448.1 527.5,449.3 616.4,442.6 654.0,435.2 683.0,428.5 700.0,424.8"/>
<polyline transform="translate(0,450.0) scale(1,1.3509) translate(0,-450.0)" stroke="#404588" fill="none" stroke-width="62.18" points="352.0,455.2 334.0,467.8 318.0,481.1"/>
<polyline transform="translate(0,450.0) scale(1,1.3509) translate(0,-450.0)" stroke="#404588" fill="none" stroke-width="62.18" points="500.0,294.5 510.5,298.2 526.3,302.2 543.8,312.5 570.0,315.1 596.3,316.4 613.8,321.6 619.0,330.7 622.6,341.0 640.0,348.8 657.6,355.2 668.0,363.1 681.6,381.2 692.0,402.3 698.0,415.9 701.8,424.1"/>
<polyline transform="translate(0,450.0) scale(1,1.3508) translate(0,-450.0)" stroke="#404588" fill="none" stroke-width="53.10" points="627.0,279.7 626.0,285.3 620.8,308.6 614.0,320.4"/>
<polyline transform="translate(0,450.0) scale(1,1.3508) translate(0,-450.0)" stroke="#404588" fill="none" stroke-width="53.10" points="850.0,294.5 837.7,308.9 830.4,323.3 816.0,339.0 806.8,356.9 797.1,374.9 780.9,389.3 761.5,398.8 740.5,408.5 716.2,416.8 700.0,422.8"/>
<polyline transform="translate(0,450.0) scale(1,1.3509) translate(0,-450.0)" stroke="#404588" fill="none" stroke-width="62.18" points="683.0,427.8 678.5,452.1 679.0,470.0 681.0,479.6 680.0,495.9 680.0,517.4 679.5,538.1 677.0,552.9 674.0,569.2 667.0,586.2 661.0,601.0 655.0,620.3"/>
<polyline transform="translate(0,450.0) scale(1,1.3109) translate(0,-450.0)" stroke="#404588" fill="none" stroke-width="70.18" points="705.0,436.3 722.0,448.5 740.0,460.7 757.0,472.1 790.0,483.6 838.0,488.1 870.0,488.9 900.0,487.4 930.0,483.6"/>
<polyline transform="translate(0,450.0) scale(1,1.3509) translate(0,-450.0)" stroke="#404588" fill="none" stroke-width="62.18" points="930.0,372.3 917.8,382.6 898.4,395.1 888.2,401.9 882.3,415.7 879.3,442.1 876.3,464.1 875.0,481.1"/>
<polyline transform="translate(0,450.0) scale(1,1.3509) translate(0,-450.0)" stroke="#404588" fill="none" stroke-width="62.18" points="1000.0,413.0 986.0,416.8 962.3,431.1 944.5,448.7 923.8,464.1 920.8,481.6 920.8,503.5 919.3,525.5 914.9,538.6 912.0,544.8"/>
<polyline transform="translate(0,450.0) scale(1,1.3509) translate(0,-450.0)" stroke="#404588" fill="#404588" stroke-width="62.18" points="644.0,432.2 691.0,424.8 712.0,432.2 737.0,447.8 735.0,460.4 686.0,473.7 660.0,461.8 643.0,442.6 644.0,432.2"/>
<polyline transform="translate(0,450.0) scale(1,1.3509) translate(0,-450.0)" stroke="#404588" fill="none" stroke-width="62.18" points="802.0,617.3 802.5,617.7"/>
<polyline transform="translate(0,450.0) scale(1,1.3507) translate(0,-450.0)" stroke="#3b528b" fill="none" stroke-width="59.23" points="469.0,316.7 466.0,338.9 463.0,361.2 459.0,377.4 455.0,389.3 450.0,398.2 448.0,411.5 446.0,427.8 443.0,447.8"/>
<polyline transform="translate(0,450.0) scale(1,1.3507) translate(0,-450.0)" stroke="#3b528b" fill="none" stroke-width="59.23" points="300.0,458.9 349.0,455.6 386.0,452.2 422.0,447.0 438.6,448.1 527.5,449.3 616.4,442.6 654.0,435.2 683.0,428.5 700.0,424.8"/>
<polyline transform="translate(0,450.0) scale(1,1.3507) translate(0,-450.0)" stroke="#3b528b" fill="none" stroke-width="59.23" points="352.0,455.2 334.0,467.8 318.0,481.1"/>
<polyline transform="translate(0,450.0) scale(1,1.3507) translate(0,-450.0)" stroke="#3b528b" fill="none" stroke-width="59.23" points="500.0,294.5 510.5,298.2 526.3,302.2 543.8,312.5 570.0,315.1 596.3,316.4 613.8,321.6 619.0,330.7 622.6,341.0 640.0,348.8 657.6,355.2 668.0,363.1 681.6,381.2 692.0,402.3 698.0,415.9 701.8,424.1"/>
<polyline transform="translate(0,450.0) scale(1,1.3506) translate(0,-450.0)" stroke="#3b528b" fill="none" stroke-width="50.65" points="627.0,279.7 626.0,285.3 620.8,308.6 614.0,320.4"/>
<polyline transform="translate(0,450.0) scale(1,1.3506) translate(0,-450.0)" stroke="#3b528b" fill="none" stroke-width="50.65" points="850.0,294.5 837.7,308.9 830.4,323.2 816.0,338.9 806.8,356.9 797.1,374.8 780.9,389.3 761.5,398.8 740.5,408.5 716.2,416.8 700.0,422.8"/>
<polyline transform="translate(0,450.0) scale(1,1.3507) translate(0,-450.0)" stroke="#3b528b" fill="none" stroke-width="59.23" points="683.0,427.8 678.5,452.1 679.0,470.0 681.0,479.6 680.0,495.9 680.0,517.4 679.5,538.1 677.0,552.9 674.0,569.2 667.0,586.2 661.0,601.0 655.0,620.3"/>
<polyline transform="translate(0,450.0) scale(1,1.3090) translate(0,-450.0)" stroke="#3b528b" fill="none" stroke-width="67.23" points="705.0,436.2 722.0,448.5 740.0,460.7 757.0,472.2 790.0,483.6 838.0,488.2 870.0,489.0 900.0,487.4 930.0,483.6"/>
<polyline transform="translate(0,450.0) scale(1,1.3507) translate(0,-450.0)" stroke="#3b528b" fill="none" stroke-width="59.23" points="930.0,372.3 917.8,382.6 898.4,395.1 888.2,401.9 882.3,415.7 879.3,442.1 876.3,464.1 875.0,481.1"/>
<polyline transform="translate(0,450.0) scale(1,1.3507) translate(0,-450.0)" stroke="#3b528b" fill="none" stroke-width="59.23" points="1000.0,413.0 986.0,416.8 962.3,431.1 944.5,448.7 923.8,464.1 920.8,481.6 920.8,503.5 919.3,525.5 914.9,538.6 912.0,544.8"/>
<polyline transform="translate(0,450.0) scale(1,1.3507) translate(0,-450.0)" stroke="#3b528b" fill="#3b528b" stroke-width="59.23" points="644.0,432.2 691.0,424.8 712.0,432.2 737.0,447.8 735.0,460.4 686.0,473.7 660.0,461.8 643.0,442.6 644.0,432.2"/>
<polyline transform="translate(0,450.0) scale(1,1.3507) translate(0,-450.0)" stroke="#3b528b" fill="none" stroke-width="59.23" points="802.0,617.3 802.5,617.7"/>
<polyline transform="translate(0,450.0) scale(1,1.3506) translate(0,-450.0)" stroke="#355e8d" fill="none" stroke-width="56.27" points="469.0,316.7 466.0,338.9 463.0,361.1 459.0,377.4 455.0,389.3 450.0,398.2 448.0,411.5 446.0,427.8 443.0,447.8"/>
<polyline transform="translate(0,450.0) scale(1,1.3506) translate(0,-450.0)" stroke="#355e8d" fill="none" stroke-width="56.27" points="300.0,458.9 349.0,455.6 386.0,452.2 422.0,447.0 438.6,448.1 527.5,449.3 616.4,442.6 654.0,435.2 683.0,428.5 700.0,424.8"/>
<polyline transform="translate(0,450.0) scale(1,1.3506) translate(0,-450.0)" stroke="#355e8d" fill="none" stroke-width="56.27" points="352.0,455.2 334.0,467.8 318.0,481.1"/>
<polyline transform="translate(0,450.0) scale(1,1.3506) translate(0,-450.0)" stroke="#355e8d" fill="none" stroke-width="56.27" points="500.0,294.5 510.5,298.2 526.3,302.1 543.8,312.5 570.0,315.1 596.3,316.4 613.8,321.5 619.0,330.6 622.6,341.0 640.0,348.8 657.6,355.2 668.0,363.1 681.6,381.2 692.0,402.3 698.0,415.9 701.8,424.1"/>
<polyline transform="translate(0,450.0) scale(1,1.3504) translate(0,-450.0)" stroke="#355e8d" fill="none" stroke-width="48.20" points="627.0,279.7 626.0,285.2 620.8,308.6 614.0,320.4"/>
<polyline transform="translate(0,450.0) scale(1,1.3504) translate(0,-450.0)" stroke="#355e8d" fill="none" stroke-width="48.20" points="850.0,294.5 837.7,308.9 830.4,323.2 816.0,338.9 806.8,356.9 797.1,374.8 780.9,389.3 761.5,398.8 740.5,408.5 716.2,416.8 700.0,422.8"/>
<polyline transform="translate(0,450.0) scale(1,1.3506) translate(0,-450.0)" stroke="#355e8d" fill="none" stroke-width="56.27" points="683.0,427.8 678.5,452.1 679.0,470.0 681.0,479.6 680.0,495.9 680.0,517.4 679.5,538.1 677.0,552.9 674.0,569.2 667.0,586.2 661.0,601.0 655.0,620.3"/>
<polyline transform="translate(0,450.0) scale(1,1.3069) translate(0,-450.0)" stroke="#355e8d" fill="none" stroke-width="64.27" points="705.0,436.2 722.0,448.5 740.0,460.7 757.0,472.2 790.0,483.7 838.0,488.3 870.0,489.0 900.0,487.5 930.0,483.7"/>
<polyline transform="translate(0,450.0) scale(1,1.3506) translate(0,-450.0)" stroke="#355e8d" fill="none" stroke-width="56.27" points="930.0,372.3 917.8,382.5 898.4,395.1 888.2,401.9 882.3,415.7 879.3,442.1 876.3,464.1 875.0,481.1"/>
<polyline transform="translate(0,450.0) scale(1,1.3506) translate(0,-450.0)" stroke="#355e8d" fill="none" stroke-width="56.27" points="1000.0,413.0 986.0,416.8 962.3,431.1 944.5,448.7 923.8,464.1 920.8,481.6 920.8,503.5 919.3,525.5 914.9,538.6 912.0,544.8"/>
<polyline transform="translate(0,450.0) scale(1,1.3506) translate(0,-450.0)" stroke="#355e8d" fill="#355e8d" stroke-width="56.27" points="644.0,432.2 691.0,424.8 712.0,432.2 737.0,447.8 735.0,460.4 686.0,473.7 660.0,461.8 643.0,442.6 644.0,432.2"/>
<polyline transform="translate(0,450.0) scale(1,1.3506) translate(0,-450.0)" stroke="#355e8d" fill="none" stroke-width="56.27" points="802.0,617.3 802.5,617.7"/>
<polyline transform="translate(0,450.0) scale(1,1.3504) translate(0,-450.0)" stroke="#306a8e" fill="none" stroke-width="53.32" points="469.0,316.7 466.0,338.9 463.0,361.1 459.0,377.4 455.0,389.3 450.0,398.2 448.0,411.5 446.0,427.8 443.0,447.8"/>
<polyline transform="translate(0,450.0) scale(1,1.3504) translate(0,-450.0)" stroke="#306a8e" fill="none" stroke-width="53.32" points="300.0,458.9 349.0,455.6 386.0,452.2 422.0,447.0 438.6,448.1 527.5,449.3 616.4,442.6 654.0,435.2 683.0,428.5 700.0,424.8"/>
<polyline transform="translate(0,450.0) scale(1,1.3504) translate(0,-450.0)" stroke="#306a8e" fill="none" stroke-width="53.32" points="352.0,455.2 334.0,467.8 318.0,481.1"/>
<polyline transform="translate(0,450.0) scale(1,1.3504) translate(0,-450.0)" stroke="#306a8e" fill="none" stroke-width="53.32" points="500.0,294.5 510.5,298.2 526.3,302.1 543.8,312.5 570.0,315.1 596.3,316.3 613.8,321.5 619.0,330.6 622.6,341.0 640.0,348.8 657.6,355.2 668.0,363.1 681.6,381.2 692.0,402.3 698.0,415.9 701.8,424.1"/>
<polyline transform="translate(0,450.0) scale(1,1.3502) translate(0,-450.0)" stroke="#306a8e" fill="none" stroke-width="45.75" points="627.0,279.7 626.0,285.2 620.8,308.5 614.0,320.4"/>
<polyline transform="translate(0,450.0) scale(1,1.3502) translate(0,-450.0)" stroke="#306a8e" fill="none" stroke-width="45.75" points="850.0,294.5 837.7,308.8 830.4,323.2 816.0,338.9 806.8,356.9 797.1,374.8 780.9,389.3 761.5,398.8 740.5,408.5 716.2,416.8 700.0,422.8"/>
<polyline transform="translate(0,450.0) scale(1,1.3504) translate(0,-450.0)" stroke="#306a8e" fill="none" stroke-width="53.32" points="683.0,427.8 678.5,452.1 679.0,470.0 681.0,479.6 680.0,495.9 680.0,517.4 679.5,538.1 677.0,552.9 674.0,569.2 667.0,586.3 661.0,601.1 655.0,620.3"/>
<polyline transform="translate(0,450.0) scale(1,1.3047) translate(0,-450.0)" stroke="#306a8e" fill="none" stroke-width="61.32" points="705.0,436.2 722.0,448.5 740.0,460.7 757.0,472.2 790.0,483.7 838.0,488.3 870.0,489.1 900.0,487.6 930.0,483.7"/>
<polyline transform="translate(0,450.0) scale(1,1.3504) translate(0,-450.0)" stroke="#306a8e" fill="none" stroke-width="53.32" points="930.0,372.2 917.8,382.5 898.4,395.1 888.2,401.9 882.3,415.7 879.3,442.1 876.3,464.1 875.0,481.1"/>
<polyline transform="translate(0,450.0) scale(1,1.3504) translate(0,-450.0)" stroke="#306a8e" fill="none" stroke-width="53.32" points="1000.0,413.0 986.0,416.8 962.3,431.1 944.5,448.7 923.8,464.1 920.8,481.6 920.8,503.5 919.3,525.5 914.9,538.6 912.0,544.8"/>
<polyline transform="translate(0,450.0) scale(1,1.3504) translate(0,-450.0)" stroke="#306a8e" fill="#306a8e" stroke-width="53.32" points="644.0,432.2 691.0,424.8 712.0,432.2 737.0,447.8 735.0,460.4 686.0,473.7 660.0,461.8 643.0,442.6 644.0,432.2"/>
<polyline transform="translate(0,450.0) scale(1,1.3504) translate(0,-450.0)" stroke="#306a8e" fill="none" stroke-width="53.32" points="802.0,617.4 802.5,617.7"/>
<polyline transform="translate(0,450.0) scale(1,1.3502) translate(0,-450.0)" stroke="#2b748e" fill="none" stroke-width="50.36" points="469.0,316.7 466.0,338.9 463.0,361.1 459.0,377.4 455.0,389.3 450.0,398.2 448.0,411.5 446.0,427.8 443.0,447.8"/>
<polyline transform="translate(0,450.0) scale(1,1.3502) translate(0,-450.0)" stroke="#2b748e" fill="none" stroke-width="50.36" points="300.0,458.9 349.0,455.6 386.0,452.2 422.0,447.0 438.6,448.1 527.5,449.3 616.4,442.6 654.0,435.2 683.0,428.5 700.0,424.8"/>
<polyline transform="translate(0,450.0) scale(1,1.3502) translate(0,-450.0)" stroke="#2b748e" fill="none" stroke-width="50.36" points="352.0,455.2 334.0,467.8 318.0,481.1"/>
<polyline transform="translate(0,450.0) scale(1,1.3502) translate(0,-450.0)" stroke="#2b748e" fill="none" stroke-width="50.36" points="500.0,294.5 510.5,298.2 526.3,302.1 543.8,312.5 570.0,315.1 596.3,316.3 613.8,321.5 619.0,330.6 622.6,341.0 640.0,348.8 657.6,355.2 668.0,363.0 681.6,381.2 692.0,402.3 698.0,415.9 701.8,424.1"/>
<polyline transform="translate(0,450.0) scale(1,1.3500) translate(0,-450.0)" stroke="#2b748e" fill="none" stroke-width="43.30" points="627.0,279.6 626.0,285.2 620.8,308.5 614.0,320.4"/>
<polyline transform="translate(0,450.0) scale(1,1.3500) translate(0,-450.0)" stroke="#2b748e" fill="none" stroke-width="43.30" points="850.0,294.4 837.7,308.8 830.4,323.2 816.0,338.9 806.8,356.9 797.1,374.8 780.9,389.3 761.5,398.8 740.5,408.4 716.2,416.8 700.0,422.8"/>
<polyline transform="translate(0,450.0) scale(1,1.3502) translate(0,-450.0)" stroke="#2b748e" fill="none" stroke-width="50.36" points="683.0,427.8 678.5,452.1 679.0,470.0 681.0,479.6 680.0,495.9 680.0,517.4 679.5,538.1 677.0,552.9 674.0,569.2 667.0,586.3 661.0,601.1 655.0,620.3"/>
<polyline transform="translate(0,450.0) scale(1,1.3022) translate(0,-450.0)" stroke="#2b748e" fill="none" stroke-width="58.36" points="705.0,436.2 722.0,448.5 740.0,460.8 757.0,472.3 790.0,483.8 838.0,488.4 870.0,489.2 900.0,487.6 930.0,483.8"/>
<polyline transform="translate(0,450.0) scale(1,1.3502) translate(0,-450.0)" stroke="#2b748e" fill="none" stroke-width="50.36" points="930.0,372.2 917.8,382.5 898.4,395.1 888.2,401.9 882.3,415.7 879.3,442.1 876.3,464.1 875.0,481.1"/>
<polyline transform="translate(0,450.0) scale(1,1.3502) translate(0,-450.0)" stroke="#2b748e" fill="none" stroke-width="50.36" points="1000.0,413.0 986.0,416.8 962.3,431.1 944.5,448.7 923.8,464.1 920.8,481.6 920.8,503.5 919.3,525.5 914.9,538.7 912.0,544.8"/>
<polyline transform="translate(0,450.0) scale(1,1.3502) translate(0,-450.0)" stroke="#2b748e" fill="#2b748e" stroke-width="50.36" points="644.0,432.2 691.0,424.8 712.0,432.2 737.0,447.8 735.0,460.4 686.0,473.7 660.0,461.9 643.0,442.6 644.0,432.2"/>
<polyline transform="translate(0,450.0) scale(1,1.3502) translate(0,-450.0)" stroke="#2b748e" fill="none" stroke-width="50.36" points="802.0,617.4 802.5,617.8"/>
<polyline transform="translate(0,450.0) scale(1,1.3500) translate(0,-450.0)" stroke="#27808e" fill="none" stroke-width="47.41" points="469.0,316.7 466.0,338.9 463.0,361.1 459.0,377.4 455.0,389.3 450.0,398.1 448.0,411.5 446.0,427.8 443.0,447.8"/>
<polyline transform="translate(0,450.0) scale(1,1.3500) translate(0,-450.0)" stroke="#27808e" fill="none" stroke-width="47.41" points="300.0,458.9 349.0,455.6 386.0,452.2 422.0,447.0 438.6,448.1 527.5,449.3 616.4,442.6 654.0,435.2 683.0,428.5 700.0,424.8"/>
<polyline transform="translate(0,450.0) scale(1,1.3500) translate(0,-450.0)" stroke="#27808e" fill="none" stroke-width="47.41" points="352.0,455.2 334.0,467.8 318.0,481.1"/>
<polyline transform="translate(0,450.0) scale(1,1.3500) translate(0,-450.0)" stroke="#27808e" fill="none" stroke-width="47.41" points="500.0,294.4 510.5,298.1 526.3,302.1 543.8,312.4 570.0,315.0 596.3,316.3 613.8,321.5 619.0,330.6 622.6,341.0 640.0,348.7 657.6,355.2 668.0,363.0 681.6,381.2 692.0,402.3 698.0,415.9 701.8,424.1"/>
<polyline transform="translate(0,450.0) scale(1,1.3497) translate(0,-450.0)" stroke="#27808e" fill="none" stroke-width="40.85" points="627.0,279.6 626.0,285.2 620.8,308.5 614.0,320.3"/>
<polyline transform="translate(0,450.0) scale(1,1.3497) translate(0,-450.0)" stroke="#27808e" fill="none" stroke-width="40.85" points="850.0,294.4 837.7,308.8 830.4,323.2 816.0,338.9 806.8,356.9 797.1,374.8 780.9,389.2 761.5,398.8 740.5,408.4 716.2,416.8 700.0,422.8"/>
<polyline transform="translate(0,450.0) scale(1,1.3500) translate(0,-450.0)" stroke="#27808e" fill="none" stroke-width="47.41" points="683.0,427.8 678.5,452.1 679.0,470.0 681.0,479.6 680.0,495.9 680.0,517.4 679.5,538.2 677.0,553.0 674.0,569.3 667.0,586.3 661.0,601.1 655.0,620.4"/>
<polyline transform="translate(0,450.0) scale(1,1.2994) translate(0,-450.0)" stroke="#27808e" fill="none" stroke-width="55.41" points="705.0,436.1 722.0,448.5 740.0,460.8 757.0,472.3 790.0,483.9 838.0,488.5 870.0,489.2 900.0,487.7 930.0,483.9"/>
<polyline transform="translate(0,450.0) scale(1,1.3500) translate(0,-450.0)" stroke="#27808e" fill="none" stroke-width="47.41" points="930.0,372.2 917.8,382.5 898.4,395.1 888.2,401.9 882.3,415.7 879.3,442.1 876.3,464.1 875.0,481.1"/>
<polyline transform="translate(0,450.0) scale(1,1.3500) translate(0,-450.0)" stroke="#27808e" fill="none" stroke-width="47.41" points="1000.0,413.0 986.0,416.8 962.3,431.1 944.5,448.7 923.8,464.1 920.8,481.6 920.8,503.6 919.3,525.6 914.9,538.7 912.0,544.8"/>
<polyline transform="translate(0,450.0) scale(1,1.3500) translate(0,-450.0)" stroke="#27808e" fill="#27808e" stroke-width="47.41" points="644.0,432.2 691.0,424.8 712.0,432.2 737.0,447.8 735.0,460.4 686.0,473.7 660.0,461.9 643.0,442.6 644.0,432.2"/>
<polyline transform="translate(0,450.0) scale(1,1.3500) translate(0,-450.0)" stroke="#27808e" fill="none" stroke-width="47.41" points="802.0,617.4 802.5,617.8"/>
<polyline transform="translate(0,450.0) scale(1,1.3497) translate(0,-450.0)" stroke="#228b8d" fill="none" stroke-width="44.45" points="469.0,316.6 466.0,338.9 463.0,361.1 459.0,377.4 455.0,389.2 450.0,398.1 448.0,411.5 446.0,427.8 443.0,447.8"/>
<polyline transform="translate(0,450.0) scale(1,1.3497) translate(0,-450.0)" stroke="#228b8d" fill="none" stroke-width="44.45" points="300.0,458.9 349.0,455.6 386.0,452.2 422.0,447.0 438.6,448.1 527.5,449.3 616.4,442.6 654.0,435.2 683.0,428.5 700.0,424.8"/>
<polyline transform="translate(0,450.0) scale(1,1.3497) translate(0,-450.0)" stroke="#228b8d" fill="none" stroke-width="44.45" points="352.0,455.2 334.0,467.8 318.0,481.1"/>
<polyline transform="translate(0,450.0) scale(1,1.3497) translate(0,-450.0)" stroke="#228b8d" fill="none" stroke-width="44.45" points="500.0,294.4 510.5,298.1 526.3,302.0 543.8,312.4 570.0,315.0 596.3,316.3 613.8,321.5 619.0,330.6 622.6,340.9 640.0,348.7 657.6,355.2 668.0,363.0 681.6,381.2 692.0,402.3 698.0,415.9 701.8,424.1"/>
<polyline transform="translate(0,450.0) scale(1,1.3494) translate(0,-450.0)" stroke="#228b8d" fill="none" stroke-width="38.40" points="627.0,279.6 626.0,285.1 620.8,308.5 614.0,320.3"/>
<polyline transform="translate(0,450.0) scale(1,1.3494) translate(0,-450.0)" stroke="#228b8d" fill="none" stroke-width="38.40" points="850.0,294.4 837.7,308.8 830.4,323.1 816.0,338.8 806.8,356.8 797.1,374.8 780.9,389.2 761.5,398.8 740.5,408.4 716.2,416.8 700.0,422.8"/>
<polyline transform="translate(0,450.0) scale(1,1.3497) translate(0,-450.0)" stroke="#228b8d" fill="none" stroke-width="44.45" points="683.0,427.8 678.5,452.1 679.0,470.0 681.0,479.6 680.0,495.9 680.0,517.4 679.5,538.2 677.0,553.0 674.0,569.3 667.0,586.3 661.0,601.1 655.0,620.4"/>
<polyline transform="translate(0,450.0) scale(1,1.2964) translate(0,-450.0)" stroke="#228b8d" fill="none" stroke-width="52.45" points="705.0,436.1 722.0,448.5 740.0,460.8 757.0,472.4 790.0,483.9 838.0,488.6 870.0,489.3 900.0,487.8 930.0,483.9"/>
<polyline transform="translate(0,450.0) scale(1,1.3497) translate(0,-450.0)" stroke="#228b8d" fill="none" stroke-width="44.45" points="930.0,372.2 917.8,382.5 898.4,395.1 888.2,401.8 882.3,415.7 879.3,442.1 876.3,464.1 875.0,481.1"/>
<polyline transform="translate(0,450.0) scale(1,1.3497) translate(0,-450.0)" stroke="#228b8d" fill="none" stroke-width="44.45" points="1000.0,413.0 986.0,416.8 962.3,431.1 944.5,448.7 923.8,464.1 920.8,481.6 920.8,503.6 919.3,525.6 914.9,538.7 912.0,544.8"/>
<polyline transform="translate(0,450.0) scale(1,1.3497) translate(0,-450.0)" stroke="#228b8d" fill="#228b8d" stroke-width="44.45" points="644.0,432.2 691.0,424.8 712.0,432.2 737.0,447.8 735.0,460.4 686.0,473.7 660.0,461.9 643.0,442.6 644.0,432.2"/>
<polyline transform="translate(0,450.0) scale(1,1.3497) translate(0,-450.0)" stroke="#228b8d" fill="none" stroke-width="44.45" points="802.0,617.4 802.5,617.8"/>
<polyline transform="translate(0,450.0) scale(1,1.3494) translate(0,-450.0)" stroke="#1f958b" fill="none" stroke-width="41.50" points="469.0,316.6 466.0,338.8 463.0,361.1 459.0,377.4 455.0,389.2 450.0,398.1 448.0,411.5 446.0,427.8 443.0,447.8"/>
<polyline transform="translate(0,450.0) scale(1,1.3494) translate(0,-450.0)" stroke="#1f958b" fill="none" stroke-width="41.50" points="300.0,458.9 349.0,455.6 386.0,452.2 422.0,447.0 438.6,448.1 527.5,449.3 616.4,442.6 654.0,435.2 683.0,428.5 700.0,424.8"/>
<polyline transform="translate(0,450.0) scale(1,1.3494) translate(0,-450.0)" stroke="#1f958b" fill="none" stroke-width="41.50" points="352.0,455.2 334.0,467.8 318.0,481.1"/>
<polyline transform="translate(0,450.0) scale(1,1.3494) translate(0,-450.0)" stroke="#1f958b" fill="none" stroke-width="41.50" points="500.0,294.4 510.5,298.1 526.3,302.0 543.8,312.4 570.0,315.0 596.3,316.2 613.8,321.4 619.0,330.5 622.6,340.9 640.0,348.7 657.6,355.1 668.0,363.0 681.6,381.2 692.0,402.3 698.0,415.9 701.8,424.1"/>
<polyline transform="translate(0,450.0) scale(1,1.3491) translate(0,-450.0)" stroke="#1f958b" fill="none" stroke-width="35.95" points="627.0,279.5 626.0,285.1 620.8,308.4 614.0,320.3"/>
<polyline transform="translate(0,450.0) scale(1,1.3491) translate(0,-450.0)" stroke="#1f958b" fill="none" stroke-width="35.95" points="850.0,294.3 837.7,308.7 830.4,323.1 816.0,338.8 806.8,356.8 797.1,374.8 780.9,389.2 761.5,398.8 740.5,408.4 716.2,416.8 700.0,422.8"/>
<polyline transform="translate(0,450.0) scale(1,1.3494) translate(0,-450.0)" stroke="#1f958b" fill="none" stroke-width="41.50" points="683.0,427.8 678.5,452.1 679.0,470.0 681.0,479.6 680.0,495.9 680.0,517.4 679.5,538.2 677.0,553.0 674.0,569.3 667.0,586.4 661.0,601.2 655.0,620.4"/>
<polyline transform="translate(0,450.0) scale(1,1.2929) translate(0,-450.0)" stroke="#1f958b" fill="none" stroke-width="49.50" points="705.0,436.1 722.0,448.5 740.0,460.8 757.0,472.4 790.0,484.0 838.0,488.7 870.0,489.4 900.0,487.9 930.0,484.0"/>
<polyline transform="translate(0,450.0) scale(1,1.3494) translate(0,-450.0)" stroke="#1f958b" fill="none" stroke-width="41.50" points="930.0,372.2 917.8,382.5 898.4,395.1 888.2,401.8 882.3,415.7 879.3,442.1 876.3,464.1 875.0,481.1"/>
<polyline transform="translate(0,450.0) scale(1,1.3494) translate(0,-450.0)" stroke="#1f958b" fill="none" stroke-width="41.50" points="1000.0,412.9 986.0,416.8 962.3,431.1 944.5,448.7 923.8,464.1 920.8,481.6 920.8,503.6 919.3,525.6 914.9,538.7 912.0,544.9"/>
<polyline transform="translate(0,450.0) scale(1,1.3494) translate(0,-450.0)" stroke="#1f958b" fill="#1f958b" stroke-width="41.50" points="644.0,432.2 691.0,424.8 712.0,432.2 737.0,447.8 735.0,460.4 686.0,473.7 660.0,461.9 643.0,442.6 644.0,432.2"/>
<polyline transform="translate(0,450.0) scale(1,1.3494) translate(0,-450.0)" stroke="#1f958b" fill="none" stroke-width="41.50" points="802.0,617.5 802.5,617.9"/>
<polyline transform="translate(0,450.0) scale(1,1.3491) translate(0,-450.0)" stroke="#1fa188" fill="none" stroke-width="38.55" points="469.0,316.6 466.0,338.8 463.0,361.0 459.0,377.4 455.0,389.2 450.0,398.1 448.0,411.5 446.0,427.8 443.0,447.8"/>
<polyline transform="translate(0,450.0) scale(1,1.3491) translate(0,-450.0)" stroke="#1fa188" fill="none" stroke-width="38.55" points="300.0,458.9 349.0,455.6 386.0,452.2 422.0,447.0 438.6,448.1 527.5,449.3 616.4,442.6 654.0,435.2 683.0,428.5 700.0,424.8"/>
<polyline transform="translate(0,450.0) scale(1,1.3491) translate(0,-450.0)" stroke="#1fa188" fill="none" stroke-width="38.55" points="352.0,455.2 334.0,467.8 318.0,481.1"/>
<polyline transform="translate(0,450.0) scale(1,1.3491) translate(0,-450.0)" stroke="#1fa188" fill="none" stroke-width="38.55" points="500.0,294.3 510.5,298.0 526.3,302.0 543.8,312.3 570.0,314.9 596.3,316.2 613.8,321.4 619.0,330.5 622.6,340.9 640.0,348.7 657.6,355.1 668.0,363.0 681.6,381.1 692.0,402.3 698.0,415.9 701.8,424.1"/>
<polyline transform="translate(0,450.0) scale(1,1.3487) translate(0,-450.0)" stroke="#1fa188" fill="none" stroke-width="33.50" points="627.0,279.5 626.0,285.0 620.8,308.4 614.0,320.2"/>
<polyline transform="translate(0,450.0) scale(1,1.3487) translate(0,-450.0)" stroke="#1fa188" fill="none" stroke-width="33.50" points="850.0,294.3 837.7,308.7 830.4,323.1 816.0,338.8 806.8,356.8 797.1,374.7 780.9,389.2 761.5,398.8 740.5,408.4 716.2,416.8 700.0,422.8"/>
<polyline transform="translate(0,450.0) scale(1,1.3491) translate(0,-450.0)" stroke="#1fa188" fill="none" stroke-width="38.55" points="683.0,427.8 678.5,452.1 679.0,470.0 681.0,479.7 680.0,496.0 680.0,517.5 679.5,538.2 677.0,553.0 674.0,569.3 667.0,586.4 661.0,601.2 655.0,620.5"/>
<polyline transform="translate(0,450.0) scale(1,1.2891) translate(0,-450.0)" stroke="#1fa188" fill="none" stroke-width="46.55" points="705.0,436.0 722.0,448.4 740.0,460.9 757.0,472.5 790.0,484.1 838.0,488.8 870.0,489.6 900.0,488.0 930.0,484.1"/>
<polyline transform="translate(0,450.0) scale(1,1.3491) translate(0,-450.0)" stroke="#1fa188" fill="none" stroke-width="38.55" points="930.0,372.2 917.8,382.5 898.4,395.1 888.2,401.8 882.3,415.7 879.3,442.1 876.3,464.1 875.0,481.1"/>
<polyline transform="translate(0,450.0) scale(1,1.3491) translate(0,-450.0)" stroke="#1fa188" fill="none" stroke-width="38.55" points="1000.0,412.9 986.0,416.8 962.3,431.1 944.5,448.7 923.8,464.1 920.8,481.7 920.8,503.6 919.3,525.6 914.9,538.7 912.0,544.9"/>
<polyline transform="translate(0,450.0) scale(1,1.3491) translate(0,-450.0)" stroke="#1fa188" fill="#1fa188" stroke-width="38.55" points="644.0,432.2 691.0,424.8 712.0,432.2 737.0,447.8 735.0,460.4 686.0,473.7 660.0,461.9 643.0,442.6 644.0,432.2"/>
<polyline transform="translate(0,450.0) scale(1,1.3491) translate(0,-450.0)" stroke="#1fa188" fill="none" stroke-width="38.55" points="802.0,617.5 802.5,617.9"/>
<polyline transform="translate(0,450.0) scale(1,1.3487) translate(0,-450.0)" stroke="#25ac82" fill="none" stroke-width="35.59" points="469.0,316.5 466.0,338.8 463.0,361.0 459.0,377.3 455.0,389.2 450.0,398.1 448.0,411.4 446.0,427.8 443.0,447.8"/>
<polyline transform="translate(0,450.0) scale(1,1.3487) translate(0,-450.0)" stroke="#25ac82" fill="none" stroke-width="35.59" points="300.0,458.9 349.0,455.6 386.0,452.2 422.0,447.0 438.6,448.1 527.5,449.3 616.4,442.6 654.0,435.2 683.0,428.5 700.0,424.8"/>
<polyline transform="translate(0,450.0) scale(1,1.3487) translate(0,-450.0)" stroke="#25ac82" fill="none" stroke-width="35.59" points="352.0,455.2 334.0,467.8 318.0,481.1"/>
<polyline transform="translate(0,450.0) scale(1,1.3487) translate(0,-450.0)" stroke="#25ac82" fill="none" stroke-width="35.59" points="500.0,294.3 510.5,298.0 526.3,301.9 543.8,312.3 570.0,314.9 596.3,316.2 613.8,321.4 619.0,330.5 622.6,340.9 640.0,348.6 657.6,355.1 668.0,363.0 681.6,381.1 692.0,402.2 698.0,415.9 701.8,424.0"/>
<polyline transform="translate(0,450.0) scale(1,1.3483) translate(0,-450.0)" stroke="#25ac82" fill="none" stroke-width="31.05" points="627.0,279.4 626.0,285.0 620.8,308.3 614.0,320.2"/>
<polyline transform="translate(0,450.0) scale(1,1.3483) translate(0,-450.0)" stroke="#25ac82" fill="none" stroke-width="31.05" points="850.0,294.2 837.7,308.6 830.4,323.0 816.0,338.7 806.8,356.8 797.1,374.7 780.9,389.2 761.5,398.7 740.5,408.4 716.2,416.8 700.0,422.8"/>
<polyline transform="translate(0,450.0) scale(1,1.3487) translate(0,-450.0)" stroke="#25ac82" fill="none" stroke-width="35.59" points="683.0,427.8 678.5,452.1 679.0,470.0 681.0,479.7 680.0,496.0 680.0,517.5 679.5,538.2 677.0,553.1 674.0,569.4 667.0,586.4 661.0,601.3 655.0,620.5"/>
<polyline transform="translate(0,450.0) scale(1,1.2847) translate(0,-450.0)" stroke="#25ac82" fill="none" stroke-width="43.59" points="705.0,436.0 722.0,448.4 740.0,460.9 757.0,472.6 790.0,484.2 838.0,488.9 870.0,489.7 900.0,488.1 930.0,484.2"/>
<polyline transform="translate(0,450.0) scale(1,1.3487) translate(0,-450.0)" stroke="#25ac82" fill="none" stroke-width="35.59" points="930.0,372.1 917.8,382.5 898.4,395.1 888.2,401.8 882.3,415.7 879.3,442.1 876.3,464.1 875.0,481.1"/>
<polyline transform="translate(0,450.0) scale(1,1.3487) translate(0,-450.0)" stroke="#25ac82" fill="none" stroke-width="35.59" points="1000.0,412.9 986.0,416.8 962.3,431.1 944.5,448.7 923.8,464.1 920.8,481.7 920.8,503.6 919.3,525.6 914.9,538.8 912.0,544.9"/>
<polyline transform="translate(0,450.0) scale(1,1.3487) translate(0,-450.0)" stroke="#25ac82" fill="#25ac82" stroke-width="35.59" points="644.0,432.2 691.0,424.8 712.0,432.2 737.0,447.8 735.0,460.4 686.0,473.7 660.0,461.9 643.0,442.6 644.0,432.2"/>
<polyline transform="translate(0,450.0) scale(1,1.3487) translate(0,-450.0)" stroke="#25ac82" fill="none" stroke-width="35.59" points="802.0,617.6 802.5,617.9"/>
<polyline transform="translate(0,450.0) scale(1,1.3482) translate(0,-450.0)" stroke="#32b67a" fill="none" stroke-width="32.64" points="469.0,316.5 466.0,338.7 463.0,361.0 459.0,377.3 455.0,389.2 450.0,398.1 448.0,411.4 446.0,427.7 443.0,447.8"/>
<polyline transform="translate(0,450.0) scale(1,1.3482) translate(0,-450.0)" stroke="#32b67a" fill="none" stroke-width="32.64" points="300.0,458.9 349.0,455.6 386.0,452.2 422.0,447.0 438.6,448.1 527.5,449.3 616.4,442.6 654.0,435.2 683.0,428.5 700.0,424.8"/>
<polyline transform="translate(0,450.0) scale(1,1.3482) translate(0,-450.0)" stroke="#32b67a" fill="none" stroke-width="32.64" points="352.0,455.2 334.0,467.8 318.0,481.2"/>
<polyline transform="translate(0,450.0) scale(1,1.3482) translate(0,-450.0)" stroke="#32b67a" fill="none" stroke-width="32.64" points="500.0,294.2 510.5,297.9 526.3,301.9 543.8,312.3 570.0,314.9 596.3,316.1 613.8,321.3 619.0,330.4 622.6,340.8 640.0,348.6 657.6,355.1 668.0,362.9 681.6,381.1 692.0,402.2 698.0,415.9 701.8,424.0"/>
<polyline transform="translate(0,450.0) scale(1,1.3477) translate(0,-450.0)" stroke="#32b67a" fill="none" stroke-width="28.60" points="627.0,279.3 626.0,284.9 620.8,308.3 614.0,320.2"/>
<polyline transform="translate(0,450.0) scale(1,1.3477) translate(0,-450.0)" stroke="#32b67a" fill="none" stroke-width="28.60" points="850.0,294.2 837.7,308.6 830.4,323.0 816.0,338.7 806.8,356.7 797.1,374.7 780.9,389.2 761.5,398.7 740.5,408.4 716.2,416.8 700.0,422.8"/>
<polyline transform="translate(0,450.0) scale(1,1.3482) translate(0,-450.0)" stroke="#32b67a" fill="none" stroke-width="32.64" points="683.0,427.7 678.5,452.1 679.0,470.0 681.0,479.7 680.0,496.0 680.0,517.5 679.5,538.3 677.0,553.1 674.0,569.4 667.0,586.5 661.0,601.3 655.0,620.6"/>
<polyline transform="translate(0,450.0) scale(1,1.2796) translate(0,-450.0)" stroke="#32b67a" fill="none" stroke-width="40.64" points="705.0,435.9 722.0,448.4 740.0,460.9 757.0,472.7 790.0,484.4 838.0,489.1 870.0,489.9 900.0,488.3 930.0,484.4"/>
<polyline transform="translate(0,450.0) scale(1,1.3482) translate(0,-450.0)" stroke="#32b67a" fill="none" stroke-width="32.64" points="930.0,372.1 917.8,382.4 898.4,395.0 888.2,401.8 882.3,415.7 879.3,442.1 876.3,464.1 875.0,481.2"/>
<polyline transform="translate(0,450.0) scale(1,1.3482) translate(0,-450.0)" stroke="#32b67a" fill="none" stroke-width="32.64" points="1000.0,412.9 986.0,416.8 962.3,431.1 944.5,448.7 923.8,464.1 920.8,481.7 920.8,503.6 919.3,525.7 914.9,538.8 912.0,544.9"/>
<polyline transform="translate(0,450.0) scale(1,1.3482) translate(0,-450.0)" stroke="#32b67a" fill="#32b67a" stroke-width="32.64" points="644.0,432.2 691.0,424.8 712.0,432.2 737.0,447.8 735.0,460.4 686.0,473.7 660.0,461.9 643.0,442.6 644.0,432.2"/>
<polyline transform="translate(0,450.0) scale(1,1.3482) translate(0,-450.0)" stroke="#32b67a" fill="none" stroke-width="32.64" points="802.0,617.6 802.5,618.0"/>
<polyline transform="translate(0,450.0) scale(1,1.3476) translate(0,-450.0)" stroke="#46c06f" fill="none" stroke-width="29.68" points="469.0,316.4 466.0,338.7 463.0,361.0 459.0,377.3 455.0,389.2 450.0,398.1 448.0,411.4 446.0,427.7 443.0,447.8"/>
<polyline transform="translate(0,450.0) scale(1,1.3476) translate(0,-450.0)" stroke="#46c06f" fill="none" stroke-width="29.68" points="300.0,458.9 349.0,455.6 386.0,452.2 422.0,447.0 438.6,448.1 527.5,449.3 616.4,442.6 654.0,435.2 683.0,428.5 700.0,424.8"/>
<polyline transform="translate(0,450.0) scale(1,1.3476) translate(0,-450.0)" stroke="#46c06f" fill="none" stroke-width="29.68" points="352.0,455.2 334.0,467.8 318.0,481.2"/>
<polyline transform="translate(0,450.0) scale(1,1.3476) translate(0,-450.0)" stroke="#46c06f" fill="none" stroke-width="29.68" points="500.0,294.2 510.5,297.9 526.3,301.8 543.8,312.2 570.0,314.8 596.3,316.1 613.8,321.3 619.0,330.4 622.6,340.8 640.0,348.6 657.6,355.0 668.0,362.9 681.6,381.1 692.0,402.2 698.0,415.9 701.8,424.0"/>
<polyline transform="translate(0,450.0) scale(1,1.3471) translate(0,-450.0)" stroke="#46c06f" fill="none" stroke-width="26.15" points="627.0,279.3 626.0,284.8 620.8,308.2 614.0,320.1"/>
<polyline transform="translate(0,450.0) scale(1,1.3471) translate(0,-450.0)" stroke="#46c06f" fill="none" stroke-width="26.15" points="850.0,294.1 837.7,308.5 830.4,322.9 816.0,338.7 806.8,356.7 797.1,374.7 780.9,389.1 761.5,398.7 740.5,408.4 716.2,416.7 700.0,422.8"/>
<polyline transform="translate(0,450.0) scale(1,1.3476) translate(0,-450.0)" stroke="#46c06f" fill="none" stroke-width="29.68" points="683.0,427.7 678.5,452.1 679.0,470.0 681.0,479.7 680.0,496.0 680.0,517.5 679.5,538.3 677.0,553.1 674.0,569.5 667.0,586.5 661.0,601.4 655.0,620.7"/>
<polyline transform="translate(0,450.0) scale(1,1.2738) translate(0,-450.0)" stroke="#46c06f" fill="none" stroke-width="37.68" points="705.0,435.9 722.0,448.4 740.0,461.0 757.0,472.8 790.0,484.5 838.0,489.3 870.0,490.0 900.0,488.5 930.0,484.5"/>
<polyline transform="translate(0,450.0) scale(1,1.3476) translate(0,-450.0)" stroke="#46c06f" fill="none" stroke-width="29.68" points="930.0,372.1 917.8,382.4 898.4,395.0 888.2,401.8 882.3,415.6 879.3,442.1 876.3,464.1 875.0,481.2"/>
<polyline transform="translate(0,450.0) scale(1,1.3476) translate(0,-450.0)" stroke="#46c06f" fill="none" stroke-width="29.68" points="1000.0,412.9 986.0,416.8 962.3,431.1 944.5,448.7 923.8,464.1 920.8,481.7 920.8,503.6 919.3,525.7 914.9,538.8 912.0,545.0"/>
<polyline transform="translate(0,450.0) scale(1,1.3476) translate(0,-450.0)" stroke="#46c06f" fill="#46c06f" stroke-width="29.68" points="644.0,432.2 691.0,424.8 712.0,432.2 737.0,447.8 735.0,460.4 686.0,473.7 660.0,461.9 643.0,442.6 644.0,432.2"/>
<polyline transform="translate(0,450.0) scale(1,1.3476) translate(0,-450.0)" stroke="#46c06f" fill="none" stroke-width="29.68" points="802.0,617.7 802.5,618.1"/>
<polyline transform="translate(0,450.0) scale(1,1.3469) translate(0,-450.0)" stroke="#5ec962" fill="none" stroke-width="26.73" points="469.0,316.4 466.0,338.6 463.0,360.9 459.0,377.2 455.0,389.1 450.0,398.0 448.0,411.4 446.0,427.7 443.0,447.8"/>
<polyline transform="translate(0,450.0) scale(1,1.3469) translate(0,-450.0)" stroke="#5ec962" fill="none" stroke-width="26.73" points="300.0,458.9 349.0,455.6 386.0,452.2 422.0,447.0 438.6,448.1 527.5,449.3 616.4,442.6 654.0,435.2 683.0,428.5 700.0,424.8"/>
<polyline transform="translate(0,450.0) scale(1,1.3469) translate(0,-450.0)" stroke="#5ec962" fill="none" stroke-width="26.73" points="352.0,455.2 334.0,467.8 318.0,481.2"/>
<polyline transform="translate(0,450.0) scale(1,1.3469) translate(0,-450.0)" stroke="#5ec962" fill="none" stroke-width="26.73" points="500.0,294.1 510.5,297.8 526.3,301.7 543.8,312.1 570.0,314.7 596.3,316.0 613.8,321.2 619.0,330.3 622.6,340.7 640.0,348.5 657.6,355.0 668.0,362.8 681.6,381.0 692.0,402.2 698.0,415.8 701.8,424.0"/>
<polyline transform="translate(0,450.0) scale(1,1.3464) translate(0,-450.0)" stroke="#5ec962" fill="none" stroke-width="23.70" points="627.0,279.2 626.0,284.7 620.8,308.1 614.0,320.0"/>
<polyline transform="translate(0,450.0) scale(1,1.3464) translate(0,-450.0)" stroke="#5ec962" fill="none" stroke-width="23.70" points="850.0,294.0 837.7,308.4 830.4,322.8 816.0,338.6 806.8,356.6 797.1,374.6 780.9,389.1 761.5,398.7 740.5,408.3 716.2,416.7 700.0,422.7"/>
<polyline transform="translate(0,450.0) scale(1,1.3469) translate(0,-450.0)" stroke="#5ec962" fill="none" stroke-width="26.73" points="683.0,427.7 678.5,452.1 679.0,470.0 681.0,479.7 680.0,496.0 680.0,517.6 679.5,538.3 677.0,553.2 674.0,569.5 667.0,586.6 661.0,601.5 655.0,620.8"/>
<polyline transform="translate(0,450.0) scale(1,1.2670) translate(0,-450.0)" stroke="#5ec962" fill="none" stroke-width="34.73" points="705.0,435.8 722.0,448.4 740.0,461.0 757.0,472.9 790.0,484.7 838.0,489.5 870.0,490.3 900.0,488.7 930.0,484.7"/>
<polyline transform="translate(0,450.0) scale(1,1.3469) translate(0,-450.0)" stroke="#5ec962" fill="none" stroke-width="26.73" points="930.0,372.0 917.8,382.4 898.4,395.0 888.2,401.7 882.3,415.6 879.3,442.1 876.3,464.1 875.0,481.2"/>
<polyline transform="translate(0,450.0) scale(1,1.3469) translate(0,-450.0)" stroke="#5ec962" fill="none" stroke-width="26.73" points="1000.0,412.9 986.0,416.7 962.3,431.1 944.5,448.7 923.8,464.1 920.8,481.7 920.8,503.7 919.3,525.7 914.9,538.9 912.0,545.0"/>
<polyline transform="translate(0,450.0) scale(1,1.3469) translate(0,-450.0)" stroke="#5ec962" fill="#5ec962" stroke-width="26.73" points="644.0,432.2 691.0,424.8 712.0,432.2 737.0,447.8 735.0,460.4 686.0,473.8 660.0,461.9 643.0,442.6 644.0,432.2"/>
<polyline transform="translate(0,450.0) scale(1,1.3469) translate(0,-450.0)" stroke="#5ec962" fill="none" stroke-width="26.73" points="802.0,617.8 802.5,618.2"/>
<polyline transform="translate(0,450.0) scale(1,1.3461) translate(0,-450.0)" stroke="#77d153" fill="none" stroke-width="23.77" points="469.0,316.3 466.0,338.6 463.0,360.9 459.0,377.2 455.0,389.1 450.0,398.0 448.0,411.4 446.0,427.7 443.0,447.8"/>
<polyline transform="translate(0,450.0) scale(1,1.3461) translate(0,-450.0)" stroke="#77d153" fill="none" stroke-width="23.77" points="300.0,458.9 349.0,455.6 386.0,452.2 422.0,447.0 438.6,448.1 527.5,449.3 616.4,442.6 654.0,435.1 683.0,428.5 700.0,424.7"/>
<polyline transform="translate(0,450.0) scale(1,1.3461) translate(0,-450.0)" stroke="#77d153" fill="none" stroke-width="23.77" points="352.0,455.2 334.0,467.8 318.0,481.2"/>
<polyline transform="translate(0,450.0) scale(1,1.3461) translate(0,-450.0)" stroke="#77d153" fill="none" stroke-width="23.77" points="500.0,294.0 510.5,297.7 526.3,301.6 543.8,312.0 570.0,314.6 596.3,315.9 613.8,321.1 619.0,330.2 622.6,340.6 640.0,348.4 657.6,354.9 668.0,362.8 681.6,381.0 692.0,402.2 698.0,415.8 701.8,424.0"/>
<polyline transform="translate(0,450.0) scale(1,1.3455) translate(0,-450.0)" stroke="#77d153" fill="none" stroke-width="21.25" points="627.0,279.1 626.0,284.6 620.8,308.0 614.0,319.9"/>
<polyline transform="translate(0,450.0) scale(1,1.3455) translate(0,-450.0)" stroke="#77d153" fill="none" stroke-width="21.25" points="850.0,293.9 837.7,308.3 830.4,322.8 816.0,338.5 806.8,356.6 797.1,374.6 780.9,389.1 761.5,398.6 740.5,408.3 716.2,416.7 700.0,422.7"/>
<polyline transform="translate(0,450.0) scale(1,1.3461) translate(0,-450.0)" stroke="#77d153" fill="none" stroke-width="23.77" points="683.0,427.7 678.5,452.1 679.0,470.1 681.0,479.7 680.0,496.1 680.0,517.6 679.5,538.4 677.0,553.3 674.0,569.6 667.0,586.7 661.0,601.6 655.0,620.9"/>
<polyline transform="translate(0,450.0) scale(1,1.2589) translate(0,-450.0)" stroke="#77d153" fill="none" stroke-width="31.77" points="705.0,435.7 722.0,448.4 740.0,461.1 757.0,473.0 790.0,484.9 838.0,489.7 870.0,490.5 900.0,488.9 930.0,484.9"/>
<polyline transform="translate(0,450.0) scale(1,1.3461) translate(0,-450.0)" stroke="#77d153" fill="none" stroke-width="23.77" points="930.0,372.0 917.8,382.3 898.4,395.0 888.2,401.7 882.3,415.6 879.3,442.1 876.3,464.1 875.0,481.2"/>
<polyline transform="translate(0,450.0) scale(1,1.3461) translate(0,-450.0)" stroke="#77d153" fill="none" stroke-width="23.77" points="1000.0,412.9 986.0,416.7 962.3,431.1 944.5,448.7 923.8,464.1 920.8,481.7 920.8,503.7 919.3,525.8 914.9,538.9 912.0,545.1"/>
<polyline transform="translate(0,450.0) scale(1,1.3461) translate(0,-450.0)" stroke="#77d153" fill="#77d153" stroke-width="23.77" points="644.0,432.2 691.0,424.7 712.0,432.2 737.0,447.8 735.0,460.4 686.0,473.8 660.0,461.9 643.0,442.6 644.0,432.2"/>
<polyline transform="translate(0,450.0) scale(1,1.3461) translate(0,-450.0)" stroke="#77d153" fill="none" stroke-width="23.77" points="802.0,617.9 802.5,618.3"/>
<polyline transform="translate(0,450.0) scale(1,1.3450) translate(0,-450.0)" stroke="#95d840" fill="none" stroke-width="20.82" points="469.0,316.2 466.0,338.5 463.0,360.8 459.0,377.1 455.0,389.0 450.0,398.0 448.0,411.3 446.0,427.7 443.0,447.8"/>
<polyline transform="translate(0,450.0) scale(1,1.3450) translate(0,-450.0)" stroke="#95d840" fill="none" stroke-width="20.82" points="300.0,458.9 349.0,455.6 386.0,452.2 422.0,447.0 438.6,448.1 527.5,449.3 616.4,442.6 654.0,435.1 683.0,428.4 700.0,424.7"/>
<polyline transform="translate(0,450.0) scale(1,1.3450) translate(0,-450.0)" stroke="#95d840" fill="none" stroke-width="20.82" points="352.0,455.2 334.0,467.8 318.0,481.2"/>
<polyline transform="translate(0,450.0) scale(1,1.3450) translate(0,-450.0)" stroke="#95d840" fill="none" stroke-width="20.82" points="500.0,293.9 510.5,297.6 526.3,301.5 543.8,311.9 570.0,314.5 596.3,315.8 613.8,321.0 619.0,330.1 622.6,340.6 640.0,348.4 657.6,354.8 668.0,362.7 681.6,380.9 692.0,402.1 698.0,415.8 701.8,424.0"/>
<polyline transform="translate(0,450.0) scale(1,1.3443) translate(0,-450.0)" stroke="#95d840" fill="none" stroke-width="18.80" points="627.0,278.9 626.0,284.5 620.8,307.9 614.0,319.8"/>
<polyline transform="translate(0,450.0) scale(1,1.3443) translate(0,-450.0)" stroke="#95d840" fill="none" stroke-width="18.80" points="850.0,293.8 837.7,308.2 830.4,322.6 816.0,338.4 806.8,356.5 797.1,374.5 780.9,389.0 761.5,398.6 740.5,408.3 716.2,416.7 700.0,422.7"/>
<polyline transform="translate(0,450.0) scale(1,1.3450) translate(0,-450.0)" stroke="#95d840" fill="none" stroke-width="20.82" points="683.0,427.7 678.5,452.1 679.0,470.1 681.0,479.7 680.0,496.1 680.0,517.7 679.5,538.5 677.0,553.3 674.0,569.7 667.0,586.8 661.0,601.7 655.0,621.0"/>
<polyline transform="translate(0,450.0) scale(1,1.2492) translate(0,-450.0)" stroke="#95d840" fill="none" stroke-width="28.82" points="705.0,435.6 722.0,448.4 740.0,461.2 757.0,473.2 790.0,485.2 838.0,490.0 870.0,490.8 900.0,489.2 930.0,485.2"/>
<polyline transform="translate(0,450.0) scale(1,1.3450) translate(0,-450.0)" stroke="#95d840" fill="none" stroke-width="20.82" points="930.0,371.9 917.8,382.3 898.4,394.9 888.2,401.7 882.3,415.6 879.3,442.0 876.3,464.1 875.0,481.2"/>
<polyline transform="translate(0,450.0) scale(1,1.3450) translate(0,-450.0)" stroke="#95d840" fill="none" stroke-width="20.82" points="1000.0,412.8 986.0,416.7 962.3,431.0 944.5,448.7 923.8,464.1 920.8,481.7 920.8,503.8 919.3,525.8 914.9,539.0 912.0,545.2"/>
<polyline transform="translate(0,450.0) scale(1,1.3450) translate(0,-450.0)" stroke="#95d840" fill="#95d840" stroke-width="20.82" points="644.0,432.2 691.0,424.7 712.0,432.2 737.0,447.8 735.0,460.4 686.0,473.8 660.0,461.9 643.0,442.6 644.0,432.2"/>
<polyline transform="translate(0,450.0) scale(1,1.3450) translate(0,-450.0)" stroke="#95d840" fill="none" stroke-width="20.82" points="802.0,618.0 802.5,618.4"/>
<polyline transform="translate(0,450.0) scale(1,1.3435) translate(0,-450.0)" stroke="#b2dd2d" fill="none" stroke-width="17.86" points="469.0,316.0 466.0,338.4 463.0,360.7 459.0,377.1 455.0,389.0 450.0,397.9 448.0,411.3 446.0,427.7 443.0,447.8"/>
<polyline transform="translate(0,450.0) scale(1,1.3435) translate(0,-450.0)" stroke="#b2dd2d" fill="none" stroke-width="17.86" points="300.0,458.9 349.0,455.6 386.0,452.2 422.0,447.0 438.6,448.1 527.5,449.3 616.4,442.6 654.0,435.1 683.0,428.4 700.0,424.7"/>
<polyline transform="translate(0,450.0) scale(1,1.3435) translate(0,-450.0)" stroke="#b2dd2d" fill="none" stroke-width="17.86" points="352.0,455.2 334.0,467.9 318.0,481.3"/>
<polyline transform="translate(0,450.0) scale(1,1.3435) translate(0,-450.0)" stroke="#b2dd2d" fill="none" stroke-width="17.86" points="500.0,293.7 510.5,297.4 526.3,301.4 543.8,311.8 570.0,314.4 596.3,315.7 613.8,320.9 619.0,330.0 622.6,340.4 640.0,348.3 657.6,354.7 668.0,362.6 681.6,380.9 692.0,402.1 698.0,415.8 701.8,423.9"/>
<polyline transform="translate(0,450.0) scale(1,1.3428) translate(0,-450.0)" stroke="#b2dd2d" fill="none" stroke-width="16.35" points="627.0,278.7 626.0,284.3 620.8,307.8 614.0,319.7"/>
<polyline transform="translate(0,450.0) scale(1,1.3428) translate(0,-450.0)" stroke="#b2dd2d" fill="none" stroke-width="16.35" points="850.0,293.6 837.7,308.1 830.4,322.5 816.0,338.3 806.8,356.4 797.1,374.4 780.9,388.9 761.5,398.5 740.5,408.2 716.2,416.6 700.0,422.7"/>
<polyline transform="translate(0,450.0) scale(1,1.3435) translate(0,-450.0)" stroke="#b2dd2d" fill="none" stroke-width="17.86" points="683.0,427.7 678.5,452.1 679.0,470.1 681.0,479.8 680.0,496.1 680.0,517.7 679.5,538.6 677.0,553.5 674.0,569.8 667.0,587.0 661.0,601.8 655.0,621.2"/>
<polyline transform="translate(0,450.0) scale(1,1.2373) translate(0,-450.0)" stroke="#b2dd2d" fill="none" stroke-width="25.86" points="705.0,435.5 722.0,448.4 740.0,461.3 757.0,473.4 790.0,485.6 838.0,490.4 870.0,491.2 900.0,489.6 930.0,485.6"/>
<polyline transform="translate(0,450.0) scale(1,1.3435) translate(0,-450.0)" stroke="#b2dd2d" fill="none" stroke-width="17.86" points="930.0,371.8 917.8,382.2 898.4,394.8 888.2,401.6 882.3,415.5 879.3,442.0 876.3,464.1 875.0,481.3"/>
<polyline transform="translate(0,450.0) scale(1,1.3435) translate(0,-450.0)" stroke="#b2dd2d" fill="none" stroke-width="17.86" points="1000.0,412.8 986.0,416.7 962.3,431.0 944.5,448.7 923.8,464.1 920.8,481.8 920.8,503.8 919.3,525.9 914.9,539.1 912.0,545.3"/>
<polyline transform="translate(0,450.0) scale(1,1.3435) translate(0,-450.0)" stroke="#b2dd2d" fill="#b2dd2d" stroke-width="17.86" points="644.0,432.1 691.0,424.7 712.0,432.1 737.0,447.8 735.0,460.4 686.0,473.8 660.0,461.9 643.0,442.6 644.0,432.1"/>
<polyline transform="translate(0,450.0) scale(1,1.3435) translate(0,-450.0)" stroke="#b2dd2d" fill="none" stroke-width="17.86" points="802.0,618.2 802.5,618.6"/>
<polyline transform="translate(0,450.0) scale(1,1.3415) translate(0,-450.0)" stroke="#d2e21b" fill="none" stroke-width="14.91" points="469.0,315.8 466.0,338.2 463.0,360.5 459.0,376.9 455.0,388.9 450.0,397.8 448.0,411.2 446.0,427.6 443.0,447.8"/>
<polyline transform="translate(0,450.0) scale(1,1.3415) translate(0,-450.0)" stroke="#d2e21b" fill="none" stroke-width="14.91" points="300.0,458.9 349.0,455.6 386.0,452.2 422.0,447.0 438.6,448.1 527.5,449.3 616.4,442.5 654.0,435.1 683.0,428.4 700.0,424.7"/>
<polyline transform="translate(0,450.0) scale(1,1.3415) translate(0,-450.0)" stroke="#d2e21b" fill="none" stroke-width="14.91" points="352.0,455.2 334.0,467.9 318.0,481.3"/>
<polyline transform="translate(0,450.0) scale(1,1.3415) translate(0,-450.0)" stroke="#d2e21b" fill="none" stroke-width="14.91" points="500.0,293.5 510.5,297.2 526.3,301.1 543.8,311.6 570.0,314.2 596.3,315.4 613.8,320.7 619.0,329.8 622.6,340.3 640.0,348.1 657.6,354.6 668.0,362.5 681.6,380.7 692.0,402.0 698.0,415.7 701.8,423.9"/>
<polyline transform="translate(0,450.0) scale(1,1.3407) translate(0,-450.0)" stroke="#d2e21b" fill="none" stroke-width="13.90" points="627.0,278.5 626.0,284.0 620.8,307.5 614.0,319.5"/>
<polyline transform="translate(0,450.0) scale(1,1.3407) translate(0,-450.0)" stroke="#d2e21b" fill="none" stroke-width="13.90" points="850.0,293.4 837.7,307.8 830.4,322.3 816.0,338.1 806.8,356.2 797.1,374.3 780.9,388.8 761.5,398.5 740.5,408.2 716.2,416.6 700.0,422.6"/>
<polyline transform="translate(0,450.0) scale(1,1.3415) translate(0,-450.0)" stroke="#d2e21b" fill="none" stroke-width="14.91" points="683.0,427.6 678.5,452.1 679.0,470.1 681.0,479.8 680.0,496.2 680.0,517.8 679.5,538.7 677.0,553.6 674.0,570.0 667.0,587.2 661.0,602.1 655.0,621.5"/>
<polyline transform="translate(0,450.0) scale(1,1.2222) translate(0,-450.0)" stroke="#d2e21b" fill="none" stroke-width="22.91" points="705.0,435.3 722.0,448.4 740.0,461.5 757.0,473.7 790.0,486.0 838.0,490.9 870.0,491.7 900.0,490.1 930.0,486.0"/>
<polyline transform="translate(0,450.0) scale(1,1.3415) translate(0,-450.0)" stroke="#d2e21b" fill="none" stroke-width="14.91" points="930.0,371.7 917.8,382.1 898.4,394.8 888.2,401.5 882.3,415.5 879.3,442.0 876.3,464.2 875.0,481.3"/>
<polyline transform="translate(0,450.0) scale(1,1.3415) translate(0,-450.0)" stroke="#d2e21b" fill="none" stroke-width="14.91" points="1000.0,412.7 986.0,416.6 962.3,431.0 944.5,448.7 923.8,464.2 920.8,481.8 920.8,503.9 919.3,526.0 914.9,539.2 912.0,545.4"/>
<polyline transform="translate(0,450.0) scale(1,1.3415) translate(0,-450.0)" stroke="#d2e21b" fill="#d2e21b" stroke-width="14.91" points="644.0,432.1 691.0,424.7 712.0,432.1 737.0,447.8 735.0,460.4 686.0,473.9 660.0,461.9 643.0,442.5 644.0,432.1"/>
<polyline transform="translate(0,450.0) scale(1,1.3415) translate(0,-450.0)" stroke="#d2e21b" fill="none" stroke-width="14.91" points="802.0,618.5 802.5,618.8"/>
<polyline transform="translate(0,450.0) scale(1,1.3384) translate(0,-450.0)" stroke="#f1e51d" fill="none" stroke-width="11.95" points="469.0,315.5 466.0,337.9 463.0,360.3 459.0,376.8 455.0,388.7 450.0,397.7 448.0,411.1 446.0,427.6 443.0,447.8"/>
<polyline transform="translate(0,450.0) scale(1,1.3384) translate(0,-450.0)" stroke="#f1e51d" fill="none" stroke-width="11.95" points="300.0,459.0 349.0,455.6 386.0,452.2 422.0,447.0 438.6,448.1 527.5,449.3 616.4,442.5 654.0,435.1 683.0,428.3 700.0,424.6"/>
<polyline transform="translate(0,450.0) scale(1,1.3384) translate(0,-450.0)" stroke="#f1e51d" fill="none" stroke-width="11.95" points="352.0,455.2 334.0,467.9 318.0,481.4"/>
<polyline transform="translate(0,450.0) scale(1,1.3384) translate(0,-450.0)" stroke="#f1e51d" fill="none" stroke-width="11.95" points="500.0,293.1 510.5,296.8 526.3,300.8 543.8,311.3 570.0,313.9 596.3,315.1 613.8,320.4 619.0,329.6 622.6,340.0 640.0,347.9 657.6,354.4 668.0,362.3 681.6,380.6 692.0,401.9 698.0,415.6 701.8,423.8"/>
<polyline transform="translate(0,450.0) scale(1,1.3378) translate(0,-450.0)" stroke="#f1e51d" fill="none" stroke-width="11.45" points="627.0,278.1 626.0,283.7 620.8,307.2 614.0,319.2"/>
<polyline transform="translate(0,450.0) scale(1,1.3378) translate(0,-450.0)" stroke="#f1e51d" fill="none" stroke-width="11.45" points="850.0,293.0 837.7,307.5 830.4,322.0 816.0,337.9 806.8,356.0 797.1,374.1 780.9,388.7 761.5,398.3 740.5,408.1 716.2,416.5 700.0,422.6"/>
<polyline transform="translate(0,450.0) scale(1,1.3384) translate(0,-450.0)" stroke="#f1e51d" fill="none" stroke-width="11.95" points="683.0,427.6 678.5,452.1 679.0,470.2 681.0,479.9 680.0,496.3 680.0,518.0 679.5,538.9 677.0,553.9 674.0,570.3 667.0,587.5 661.0,602.4 655.0,621.8"/>
<polyline transform="translate(0,450.0) scale(1,1.2027) translate(0,-450.0)" stroke="#f1e51d" fill="none" stroke-width="19.95" points="705.0,435.0 722.0,448.3 740.0,461.6 757.0,474.1 790.0,486.6 838.0,491.6 870.0,492.4 900.0,490.7 930.0,486.6"/>
<polyline transform="translate(0,450.0) scale(1,1.3384) translate(0,-450.0)" stroke="#f1e51d" fill="none" stroke-width="11.95" points="930.0,371.5 917.8,381.9 898.4,394.6 888.2,401.4 882.3,415.4 879.3,442.0 876.3,464.2 875.0,481.4"/>
<polyline transform="translate(0,450.0) scale(1,1.3384) translate(0,-450.0)" stroke="#f1e51d" fill="none" stroke-width="11.95" points="1000.0,412.6 986.0,416.5 962.3,430.9 944.5,448.7 923.8,464.2 920.8,481.9 920.8,504.0 919.3,526.2 914.9,539.4 912.0,545.6"/>
<polyline transform="translate(0,450.0) scale(1,1.3384) translate(0,-450.0)" stroke="#f1e51d" fill="#f1e51d" stroke-width="11.95" points="644.0,432.1 691.0,424.6 712.0,432.1 737.0,447.8 735.0,460.5 686.0,473.9 660.0,462.0 643.0,442.5 644.0,432.1"/>
<polyline transform="translate(0,450.0) scale(1,1.3384) translate(0,-450.0)" stroke="#f1e51d" fill="none" stroke-width="11.95" points="802.0,618.9 802.5,619.2"/>
<polyline transform="translate(0,450.0) scale(1,1.3333) translate(0,-450.0)" stroke="#fde725" fill="none" stroke-width="9.00" points="469.0,315.0 466.0,337.5 463.0,360.0 459.0,376.5 455.0,388.5 450.0,397.5 448.0,411.0 446.0,427.5 443.0,447.8"/>
<polyline transform="translate(0,450.0) scale(1,1.3333) translate(0,-450.0)" stroke="#fde725" fill="none" stroke-width="9.00" points="300.0,459.0 349.0,455.6 386.0,452.2 422.0,447.0 438.6,448.0 527.5,449.2 616.4,442.5 654.0,435.0 683.0,428.2 700.0,424.5"/>
<polyline transform="translate(0,450.0) scale(1,1.3333) translate(0,-450.0)" stroke="#fde725" fill="none" stroke-width="9.00" points="352.0,455.2 334.0,468.0 318.0,481.5"/>
<polyline transform="translate(0,450.0) scale(1,1.3333) translate(0,-450.0)" stroke="#fde725" fill="none" stroke-width="9.00" points="500.0,292.5 510.5,296.2 526.3,300.2 543.8,310.7 570.0,313.4 596.3,314.6 613.8,319.9 619.0,329.1 622.6,339.6 640.0,347.5 657.6,354.0 668.0,362.0 681.6,380.3 692.0,401.7 698.0,415.5 701.8,423.8"/>
<polyline transform="translate(0,450.0) scale(1,1.3333) translate(0,-450.0)" stroke="#fde725" fill="none" stroke-width="9.00" points="627.0,277.5 626.0,283.1 620.8,306.8 614.0,318.8"/>
<polyline transform="translate(0,450.0) scale(1,1.3333) translate(0,-450.0)" stroke="#fde725" fill="none" stroke-width="9.00" points="850.0,292.5 837.7,307.0 830.4,321.6 816.0,337.5 806.8,355.7 797.1,373.9 780.9,388.5 761.5,398.2 740.5,407.9 716.2,416.4 700.0,422.5"/>
<polyline transform="translate(0,450.0) scale(1,1.3333) translate(0,-450.0)" stroke="#fde725" fill="none" stroke-width="9.00" points="683.0,427.5 678.5,452.1 679.0,470.2 681.0,480.0 680.0,496.5 680.0,518.2 679.5,539.2 677.0,554.2 674.0,570.8 667.0,588.0 661.0,603.0 655.0,622.5"/>
<polyline transform="translate(0,450.0) scale(1,1.1765) translate(0,-450.0)" stroke="#fde725" fill="none" stroke-width="17.00" points="705.0,434.7 722.0,448.3 740.0,461.9 757.0,474.6 790.0,487.4 838.0,492.5 870.0,493.4 900.0,491.6 930.0,487.4"/>
<polyline transform="translate(0,450.0) scale(1,1.3333) translate(0,-450.0)" stroke="#fde725" fill="none" stroke-width="9.00" points="930.0,371.2 917.8,381.7 898.4,394.4 888.2,401.2 882.3,415.3 879.3,442.0 876.3,464.2 875.0,481.5"/>
<polyline transform="translate(0,450.0) scale(1,1.3333) translate(0,-450.0)" stroke="#fde725" fill="none" stroke-width="9.00" points="1000.0,412.5 986.0,416.4 962.3,430.9 944.5,448.6 923.8,464.2 920.8,482.0 920.8,504.2 919.3,526.5 914.9,539.8 912.0,546.0"/>
<polyline transform="translate(0,450.0) scale(1,1.3333) translate(0,-450.0)" stroke="#fde725" fill="#fde725" stroke-width="9.00" points="644.0,432.0 691.0,424.5 712.0,432.0 737.0,447.8 735.0,460.5 686.0,474.0 660.0,462.0 643.0,442.5 644.0,432.0"/>
<polyline transform="translate(0,450.0) scale(1,1.3333) translate(0,-450.0)" stroke="#fde725" fill="none" stroke-width="9.00" points="802.0,619.5 802.5,619.9"/>
<ellipse cx="669" cy="439" rx="3" ry="2.5" transform="rotate(0 669 439)" fill="#95d840" stroke="none" filter="url(#bl2)"/>
<ellipse cx="691" cy="434" rx="2.5" ry="6" transform="rotate(35 691 434)" fill="#95d840" stroke="none" filter="url(#bl2)"/>
<ellipse cx="670" cy="462" rx="3" ry="3.5" transform="rotate(0 670 462)" fill="#95d840" stroke="none" filter="url(#bl2)"/>
<ellipse cx="691" cy="461" rx="3" ry="5" transform="rotate(20 691 461)" fill="#95d840" stroke="none" filter="url(#bl2)"/>
<ellipse cx="715" cy="456" rx="6" ry="3.5" transform="rotate(25 715 456)" fill="#95d840" stroke="none" filter="url(#bl2)"/>
</g>
</g>
</svg>

<!-- layers panel -->
<div class="t" style="left:60px;top:133px;letter-spacing:0.3px">Layers Panel</div>
<div class="tree" style="left:58px;top:184px;width:218px;height:495px"></div>
<div class="a" style="left:59px;top:186px;width:216px;height:18px;background:#bcd8f6"></div>
<div class="a" style="left:125px;top:186px;width:149px;height:18px;border:1px dotted #6a7a8a"></div>
<svg class="a" style="left:67px;top:192px" width="11" height="7"><path d="M0.8 0.8 H10.2 L5.5 6.2 Z" fill="#fff" stroke="#000" stroke-width="1.1" stroke-linejoin="round"/></svg>
<div class="cb" style="left:85px;top:189px"><svg width="11" height="11"><path d="M3 3.6V8.2L8.2 2.8" fill="none" stroke="#000" stroke-width="2.2" stroke-linecap="round" stroke-linejoin="round"/></svg></div>
<svg class="a" style="left:105px;top:187px" width="16" height="16"><rect x="0.0" y="0.0" width="5.4" height="5.4" fill="#2d4469"/><rect x="5.3" y="0.0" width="5.4" height="5.4" fill="#7aa0d0"/><rect x="10.6" y="0.0" width="5.4" height="5.4" fill="#2d4469"/><rect x="0.0" y="5.3" width="5.4" height="5.4" fill="#7aa0d0"/><rect x="5.3" y="5.3" width="5.4" height="5.4" fill="#2d4469"/><rect x="10.6" y="5.3" width="5.4" height="5.4" fill="#7aa0d0"/><rect x="0.0" y="10.6" width="5.4" height="5.4" fill="#2d4469"/><rect x="5.3" y="10.6" width="5.4" height="5.4" fill="#7aa0d0"/></svg>
<div class="t b" style="left:127px;top:190px; text-decoration:underline;">roads_factor</div>
<div class="sw" style="left:103px;top:205px;background:#440154"></div>
<div class="t" style="left:125px;top:207px;letter-spacing:0.45px">0</div>
<div class="sw" style="left:103px;top:223px;background:#3b528b"></div>
<div class="t" style="left:125px;top:225px;letter-spacing:0.45px">0.218</div>
<div class="sw" style="left:103px;top:241px;background:#21918c"></div>
<div class="t" style="left:125px;top:243px;letter-spacing:0.45px">0.435</div>
<div class="sw" style="left:103px;top:259px;background:#5ec962"></div>
<div class="t" style="left:125px;top:261px;letter-spacing:0.45px">0.653</div>
<div class="sw" style="left:103px;top:277px;background:#fde725"></div>
<div class="t" style="left:125px;top:279px;letter-spacing:0.45px">0.87</div>
<svg class="a" style="left:67px;top:300px" width="11" height="7"><path d="M0.8 0.8 H10.2 L5.5 6.2 Z" fill="#fff" stroke="#000" stroke-width="1.1" stroke-linejoin="round"/></svg>
<div class="cb" style="left:85px;top:297px"><svg width="11" height="11"><path d="M3 3.6V8.2L8.2 2.8" fill="none" stroke="#000" stroke-width="2.2" stroke-linecap="round" stroke-linejoin="round"/></svg></div>
<svg class="a" style="left:105px;top:295px" width="16" height="16"><rect x="0.0" y="0.0" width="5.4" height="5.4" fill="#2d4469"/><rect x="5.3" y="0.0" width="5.4" height="5.4" fill="#7aa0d0"/><rect x="10.6" y="0.0" width="5.4" height="5.4" fill="#2d4469"/><rect x="0.0" y="5.3" width="5.4" height="5.4" fill="#7aa0d0"/><rect x="5.3" y="5.3" width="5.4" height="5.4" fill="#2d4469"/><rect x="10.6" y="5.3" width="5.4" height="5.4" fill="#7aa0d0"/><rect x="0.0" y="10.6" width="5.4" height="5.4" fill="#2d4469"/><rect x="5.3" y="10.6" width="5.4" height="5.4" fill="#7aa0d0"/></svg>
<div class="t b" style="left:127px;top:298px;">waters_factor</div>
<div class="sw" style="left:103px;top:313px;background:#440154"></div>
<div class="t" style="left:125px;top:315px;letter-spacing:0.45px">0</div>
<div class="sw" style="left:103px;top:331px;background:#3b528b"></div>
<div class="t" style="left:125px;top:333px;letter-spacing:0.45px">0.218</div>
<div class="sw" style="left:103px;top:349px;background:#21918c"></div>
<div class="t" style="left:125px;top:351px;letter-spacing:0.45px">0.435</div>
<div class="sw" style="left:103px;top:367px;background:#5ec962"></div>
<div class="t" style="left:125px;top:369px;letter-spacing:0.45px">0.653</div>
<div class="sw" style="left:103px;top:385px;background:#fde725"></div>
<div class="t" style="left:125px;top:387px;letter-spacing:0.45px">0.87</div>
<svg class="a" style="left:67px;top:408px" width="11" height="7"><path d="M0.8 0.8 H10.2 L5.5 6.2 Z" fill="#fff" stroke="#000" stroke-width="1.1" stroke-linejoin="round"/></svg>
<div class="cb" style="left:85px;top:405px"><svg width="11" height="11"><path d="M3 3.6V8.2L8.2 2.8" fill="none" stroke="#000" stroke-width="2.2" stroke-linecap="round" stroke-linejoin="round"/></svg></div>
<svg class="a" style="left:105px;top:403px" width="16" height="16"><rect x="0.0" y="0.0" width="5.4" height="5.4" fill="#2d4469"/><rect x="5.3" y="0.0" width="5.4" height="5.4" fill="#7aa0d0"/><rect x="10.6" y="0.0" width="5.4" height="5.4" fill="#2d4469"/><rect x="0.0" y="5.3" width="5.4" height="5.4" fill="#7aa0d0"/><rect x="5.3" y="5.3" width="5.4" height="5.4" fill="#2d4469"/><rect x="10.6" y="5.3" width="5.4" height="5.4" fill="#7aa0d0"/><rect x="0.0" y="10.6" width="5.4" height="5.4" fill="#2d4469"/><rect x="5.3" y="10.6" width="5.4" height="5.4" fill="#7aa0d0"/></svg>
<div class="t b" style="left:127px;top:406px;">waters_dist</div>
<div class="sw" style="left:103px;top:421px;background:#000"></div>
<div class="t" style="left:125px;top:423px;letter-spacing:0.45px">22.7454</div>
<div class="t" style="left:125px;top:441px;letter-spacing:0.45px">2970.56</div>
<svg class="a" style="left:67px;top:462px" width="11" height="7"><path d="M0.8 0.8 H10.2 L5.5 6.2 Z" fill="#fff" stroke="#000" stroke-width="1.1" stroke-linejoin="round"/></svg>
<div class="cb" style="left:85px;top:459px"><svg width="11" height="11"><path d="M3 3.6V8.2L8.2 2.8" fill="none" stroke="#000" stroke-width="2.2" stroke-linecap="round" stroke-linejoin="round"/></svg></div>
<svg class="a" style="left:105px;top:457px" width="16" height="16"><rect x="0.0" y="0.0" width="5.4" height="5.4" fill="#2d4469"/><rect x="5.3" y="0.0" width="5.4" height="5.4" fill="#7aa0d0"/><rect x="10.6" y="0.0" width="5.4" height="5.4" fill="#2d4469"/><rect x="0.0" y="5.3" width="5.4" height="5.4" fill="#7aa0d0"/><rect x="5.3" y="5.3" width="5.4" height="5.4" fill="#2d4469"/><rect x="10.6" y="5.3" width="5.4" height="5.4" fill="#7aa0d0"/><rect x="0.0" y="10.6" width="5.4" height="5.4" fill="#2d4469"/><rect x="5.3" y="10.6" width="5.4" height="5.4" fill="#7aa0d0"/></svg>
<div class="t b" style="left:127px;top:460px;">roads_dist</div>
<div class="sw" style="left:103px;top:475px;background:#000"></div>
<div class="t" style="left:125px;top:477px;letter-spacing:0.45px">0</div>
<div class="t" style="left:125px;top:495px;letter-spacing:0.45px">14760.9</div>
<svg class="a" style="left:67px;top:516px" width="11" height="7"><path d="M0.8 0.8 H10.2 L5.5 6.2 Z" fill="#fff" stroke="#000" stroke-width="1.1" stroke-linejoin="round"/></svg>
<div class="cb" style="left:85px;top:513px"><svg width="11" height="11"><path d="M3 3.6V8.2L8.2 2.8" fill="none" stroke="#000" stroke-width="2.2" stroke-linecap="round" stroke-linejoin="round"/></svg></div>
<svg class="a" style="left:105px;top:511px" width="16" height="16"><rect x="0.0" y="0.0" width="5.4" height="5.4" fill="#2d4469"/><rect x="5.3" y="0.0" width="5.4" height="5.4" fill="#7aa0d0"/><rect x="10.6" y="0.0" width="5.4" height="5.4" fill="#2d4469"/><rect x="0.0" y="5.3" width="5.4" height="5.4" fill="#7aa0d0"/><rect x="5.3" y="5.3" width="5.4" height="5.4" fill="#2d4469"/><rect x="10.6" y="5.3" width="5.4" height="5.4" fill="#7aa0d0"/><rect x="0.0" y="10.6" width="5.4" height="5.4" fill="#2d4469"/><rect x="5.3" y="10.6" width="5.4" height="5.4" fill="#7aa0d0"/></svg>
<div class="t b" style="left:127px;top:514px;">mean_coords_dist</div>
<div class="sw" style="left:103px;top:529px;background:#000"></div>
<div class="t" style="left:125px;top:531px;letter-spacing:0.45px">4461.18</div>
<div class="t" style="left:125px;top:549px;letter-spacing:0.45px">43956</div>
<svg class="a" style="left:67px;top:570px" width="11" height="7"><path d="M0.8 0.8 H10.2 L5.5 6.2 Z" fill="#fff" stroke="#000" stroke-width="1.1" stroke-linejoin="round"/></svg>
<div class="cb" style="left:85px;top:567px"></div>
<svg class="a" style="left:105px;top:565px" width="16" height="16"><rect x="0.0" y="0.0" width="5.4" height="5.4" fill="#2d4469"/><rect x="5.3" y="0.0" width="5.4" height="5.4" fill="#7aa0d0"/><rect x="10.6" y="0.0" width="5.4" height="5.4" fill="#2d4469"/><rect x="0.0" y="5.3" width="5.4" height="5.4" fill="#7aa0d0"/><rect x="5.3" y="5.3" width="5.4" height="5.4" fill="#2d4469"/><rect x="10.6" y="5.3" width="5.4" height="5.4" fill="#7aa0d0"/><rect x="0.0" y="10.6" width="5.4" height="5.4" fill="#2d4469"/><rect x="5.3" y="10.6" width="5.4" height="5.4" fill="#7aa0d0"/></svg>
<div class="t b" style="left:127px;top:568px;">constraints</div>
<div class="sw" style="left:103px;top:583px;background:#000"></div>
<div class="t" style="left:125px;top:585px;letter-spacing:0.45px">0</div>
<div class="t" style="left:125px;top:603px;letter-spacing:0.45px">0.999</div>
<div class="cb" style="left:85px;top:621px"><svg width="11" height="11"><path d="M3 3.6V8.2L8.2 2.8" fill="none" stroke="#000" stroke-width="2.2" stroke-linecap="round" stroke-linejoin="round"/></svg></div>
<div class="a" style="left:105px;top:619px;width:16px;height:16px;background:#a6dca6;border:1px solid #6f8f6f"></div>
<div class="t b" style="left:127px;top:622px">adm1</div>

<!-- processing toolbox -->
<div class="a" style="left:1095px;top:175px;width:1px;height:531px;background:#a0a09a"></div>
<div class="t" style="left:1097px;top:133px;letter-spacing:0.4px">Processing Toolbox</div>
<svg class="a" style="left:1333px;top:133px" width="32" height="13">
 <g fill="none" stroke="#6e6e6a" stroke-width="1">
  <rect x="1.5" y="0.5" width="11" height="11" rx="2"/>
  <rect x="5" y="2.8" width="5" height="4.5" rx="1"/>
  <rect x="3.2" y="5.2" width="5" height="4.5" rx="1" fill="#ededeb"/>
  <rect x="18.5" y="0.5" width="11" height="11" rx="2"/>
  <path d="M21.5 3.5l5 5M26.5 3.5l-5 5" stroke-width="2"/>
 </g>
</svg>
<div class="a" style="left:1096px;top:152px;width:269px;height:23px;background:#fff;border:1px solid #a9a9a3;border-right:none;border-top-color:#8f8f8a"></div>
<div class="t" style="left:1100px;top:156px;color:#a2a2a0;letter-spacing:0.5px">Search...</div>
<div class="a" style="left:1096px;top:175px;width:269px;height:531px;background:#fff;border-top:1px solid #a9a9a3"></div>
<svg class="a" style="left:1105px;top:180px" width="8" height="11"><path d="M1.2 0.8 L6.8 5.5 L1.2 10.2 Z" fill="#fff" stroke="#000" stroke-width="1.1" stroke-linejoin="round"/></svg>
<div class="t" style="left:1120px;top:179px;letter-spacing:0.58px">Recently used algorithms</div>
<svg class="a" style="left:1105px;top:198px" width="8" height="11"><path d="M1.2 0.8 L6.8 5.5 L1.2 10.2 Z" fill="#fff" stroke="#000" stroke-width="1.1" stroke-linejoin="round"/></svg>
<svg class="a" style="left:1120px;top:195px" width="16" height="16"><circle cx="9" cy="10" r="6.5" fill="#4aa3d8"/><path d="M4 8c2-1 3 1 5 0s2-3 4-2M5 12c2 1 4-1 6 1" stroke="#2e7a3a" stroke-width="1.6" fill="none"/><path d="M3 4l4-3" stroke="#333" stroke-width="1"/><rect x="2" y="11" width="11" height="4" fill="#e8e8e8" opacity="0.85"/><text x="2.3" y="14.6" font-size="4.2" font-family="Liberation Sans" font-weight="bold" fill="#222">GDAL</text></svg>
<div class="t" style="left:1140px;top:197px;letter-spacing:0.52px">GDAL/OGR [48 geoalgorithms]</div>
<svg class="a" style="left:1105px;top:216px" width="8" height="11"><path d="M1.2 0.8 L6.8 5.5 L1.2 10.2 Z" fill="#fff" stroke="#000" stroke-width="1.1" stroke-linejoin="round"/></svg>
<svg class="a" style="left:1120px;top:213px" width="16" height="16"><path d="M8 15 L2 6 M8 15 L14 6 M8 15 L5 3 M8 15 L11 3 M8 15 L8 2" stroke="#5aa040" stroke-width="1.5" fill="none"/><path d="M2 10 L8 15 L14 10" stroke="#9fd080" stroke-width="1.2" fill="none"/><rect x="1" y="1" width="14" height="14" fill="none" stroke="#ddd" stroke-width="0.6" transform="rotate(45 8 8) scale(0.9) translate(1 1)"/></svg>
<div class="t" style="left:1140px;top:215px;letter-spacing:0.48px">GRASS GIS 7 commands [314 g...</div>
<svg class="a" style="left:1105px;top:234px" width="8" height="11"><path d="M1.2 0.8 L6.8 5.5 L1.2 10.2 Z" fill="#fff" stroke="#000" stroke-width="1.1" stroke-linejoin="round"/></svg>
<svg class="a" style="left:1120px;top:231px" width="16" height="16"><circle cx="5" cy="9" r="3.5" fill="#555"/><circle cx="11" cy="4.5" r="3" fill="#3b6fd0"/><circle cx="12" cy="12" r="3.5" fill="#e03030"/><path d="M5 9L11 4.5M5 9L12 12" stroke="#333" stroke-width="1.5"/></svg>
<div class="t" style="left:1142px;top:233px;letter-spacing:0.7px">Models [4 geoalgorithms]</div>
<svg class="a" style="left:1105px;top:252px" width="8" height="11"><path d="M1.2 0.8 L6.8 5.5 L1.2 10.2 Z" fill="#fff" stroke="#000" stroke-width="1.1" stroke-linejoin="round"/></svg>
<svg class="a" style="left:1120px;top:249px" width="16" height="16"><path d="M3 15 C3 8 8 4 14 1 C12 6 10 12 4 15Z" fill="#d8e060" stroke="#8a9a30" stroke-width="0.8"/><path d="M4 13 L13 2" stroke="#4a8a30" stroke-width="1.4"/><path d="M9 13l2 2 4-5" stroke="#3a3a3a" stroke-width="1" fill="none"/></svg>
<div class="t" style="left:1140px;top:251px;letter-spacing:0.62px">QGIS geoalgorithms [116 geoal...</div>
<svg class="a" style="left:1105px;top:270px" width="8" height="11"><path d="M1.2 0.8 L6.8 5.5 L1.2 10.2 Z" fill="#fff" stroke="#000" stroke-width="1.1" stroke-linejoin="round"/></svg>
<svg class="a" style="left:1120px;top:267px" width="16" height="16"><rect x="1" y="1.5" width="14" height="13" rx="2" fill="#2b2b2b" stroke="#888" stroke-width="1"/><rect x="2.5" y="3" width="11" height="10" fill="#1c3a1c"/><path d="M4 6l2 1.5-2 1.5M7 10h4" stroke="#ddd" stroke-width="1" fill="none"/></svg>
<div class="t" style="left:1142px;top:269px;letter-spacing:0.7px">Scripts [0 geoalgorithms]</div>

<!-- layers panel header -->
<svg class="a" style="left:244px;top:133px" width="32" height="13">
 <g fill="none" stroke="#6e6e6a" stroke-width="1">
  <rect x="1.5" y="0.5" width="11" height="11" rx="2"/>
  <rect x="5" y="2.8" width="5" height="4.5" rx="1"/>
  <rect x="3.2" y="5.2" width="5" height="4.5" rx="1" fill="#ededeb"/>
  <rect x="18.5" y="0.5" width="11" height="11" rx="2"/>
  <path d="M21.5 3.5l5 5M26.5 3.5l-5 5" stroke-width="2"/>
 </g>
</svg>
<!-- tabs -->
<div class="a" style="left:58px;top:679px;width:105px;height:25px;background:#e3e3e1;border:1px solid #a9a9a3;border-top:none"></div>
<div class="a" style="left:162px;top:679px;width:95px;height:27px;background:#fff;border:1px solid #a9a9a3;border-top:none;border-bottom:none"></div>
<div class="t" style="left:65px;top:685px;letter-spacing:0.5px">Browser Panel</div>
<div class="t" style="left:169px;top:686px;letter-spacing:0.5px">Layers Panel</div>

<!-- splitter handles -->
<div class="a" style="left:1088px;top:127px;width:1px;height:580px;background:#a0a09a"></div>
<div class="a" style="left:277px;top:412px;width:4px;height:9px;background:repeating-linear-gradient(#9c9c98 0,#9c9c98 1px,transparent 1px,transparent 2px)"></div>
<div class="a" style="left:1090px;top:412px;width:4px;height:9px;background:repeating-linear-gradient(#9c9c98 0,#9c9c98 1px,transparent 1px,transparent 2px)"></div>

<!-- status bar -->
<div class="a" style="left:0;top:706px;width:1365px;height:1px;background:#a6a6a0"></div>
<div class="a" style="left:0;top:741px;width:1365px;height:1px;background:#b4b4ae"></div>
<div class="t" style="left:401px;top:718px;letter-spacing:0.5px">Coordinate</div>
<div class="a" style="left:474px;top:713px;width:127px;height:23px;background:#fff;border:1px solid #a9a9a3;border-radius:2px"></div>
<div class="t" style="left:491px;top:718px;letter-spacing:0.65px">549391,57625</div>
<!--MOUSE-->
<div class="t" style="left:638px;top:718px;letter-spacing:0.5px">Scale</div>
<div class="a" style="left:676px;top:713px;width:111px;height:23px;background:#fff;border:1px solid #a9a9a3;border-radius:2px"></div>
<div class="a" style="left:765px;top:714px;width:21px;height:21px;background:linear-gradient(#f4f4f2,#e2e2e0);border-left:1px solid #b9b9b4"></div>
<svg class="a" style="left:770px;top:721px" width="11" height="7"><path d="M0.5 0.5h9l-4.5 5.5z" fill="#000"/></svg>
<div class="t" style="left:682px;top:718px;letter-spacing:0.6px">1:520,412</div>
<!--LOCK-->
<div class="t" style="left:825px;top:718px;letter-spacing:0.5px">Magnifier</div>
<div class="a" style="left:886px;top:713px;width:80px;height:23px;background:#fff;border:1px solid #a9a9a3;border-right:none;border-radius:2px 0 0 2px"></div>
<div class="t" style="left:891px;top:718px;letter-spacing:0.5px">100%</div>
<svg class="a" style="left:955px;top:714px" width="10" height="22"><path d="M2.5 7h5l-2.5-3zM2.5 15h5l-2.5 3z" fill="#000"/></svg>
<div class="t" style="left:976px;top:718px;letter-spacing:0.5px">Rotation</div>
<div class="a" style="left:1036px;top:713px;width:82px;height:23px;background:#fff;border:1px solid #a9a9a3;border-right:none;border-radius:2px 0 0 2px"></div>
<div class="t" style="left:1042px;top:718px;letter-spacing:0.5px">0.0</div>
<svg class="a" style="left:1106px;top:714px" width="10" height="22"><path d="M2.5 7h5l-2.5-3zM2.5 15h5l-2.5 3z" fill="#000"/></svg>
<div class="cb" style="left:1126px;top:719px"><svg width="11" height="11"><path d="M3 3.6V8.2L8.2 2.8" fill="none" stroke="#000" stroke-width="2.2" stroke-linecap="round" stroke-linejoin="round"/></svg></div>
<div class="t" style="left:1145px;top:718px;letter-spacing:0.5px">Render</div>
<!--GLOBE-->
<div class="t" style="left:1231px;top:718px;letter-spacing:0.45px">EPSG:23700</div>
<!--MSG-->
</body></html>
